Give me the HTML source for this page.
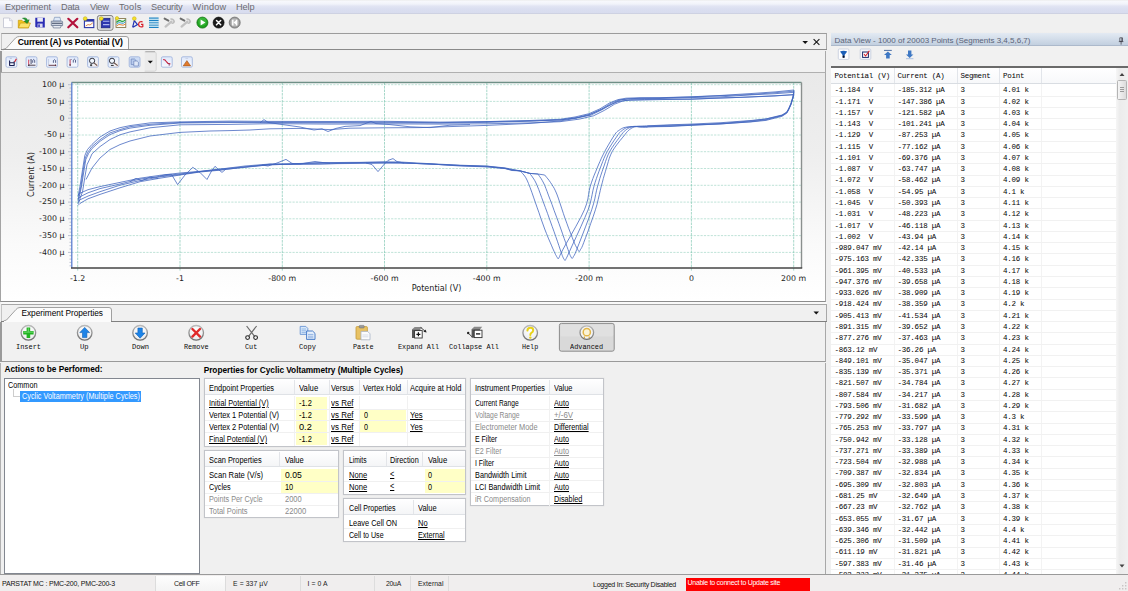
<!DOCTYPE html>
<html><head><meta charset="utf-8"><title>VersaStudio</title>
<style>
*{margin:0;padding:0;box-sizing:border-box}
html,body{width:1128px;height:591px;overflow:hidden;background:#f0f0f0}
body{position:relative;font-family:"Liberation Sans",sans-serif;font-size:8px;color:#000}
.a{position:absolute;white-space:nowrap}
.u{text-decoration:underline;text-decoration-thickness:.7px;text-underline-offset:.6px}
svg{position:absolute;overflow:visible}
.m{font-family:'Liberation Mono',monospace;font-size:7.5px;line-height:10px;color:#050505}
</style></head>
<body>
<div class="a" style="left:0.0px;top:0.0px;width:1128.0px;height:14.0px;background:linear-gradient(#ebebeb 0,#f7f8fc 1.2px,#f1f3fa 4px,#e2e5f3 6px,#dadef0 9px,#d8dcee 13px,#c9cde0 13.4px,#e8e8ee 14px)"></div>
<div class="a" style="left:5.0px;top:1.3px;font-size:9.20px;line-height:12px;letter-spacing:-0.053px;color:#6c6c70;">Experiment</div>
<div class="a" style="left:61.0px;top:1.3px;font-size:9.20px;line-height:12px;letter-spacing:-0.233px;color:#6c6c70;">Data</div>
<div class="a" style="left:90.0px;top:1.3px;font-size:9.20px;line-height:12px;letter-spacing:-0.319px;color:#6c6c70;">View</div>
<div class="a" style="left:119.0px;top:1.3px;font-size:9.20px;line-height:12px;letter-spacing:0.205px;color:#6c6c70;">Tools</div>
<div class="a" style="left:151.0px;top:1.3px;font-size:9.20px;line-height:12px;letter-spacing:-0.217px;color:#6c6c70;">Security</div>
<div class="a" style="left:192.5px;top:1.3px;font-size:9.20px;line-height:12px;letter-spacing:0.213px;color:#6c6c70;">Window</div>
<div class="a" style="left:236.0px;top:1.3px;font-size:9.20px;line-height:12px;letter-spacing:-0.105px;color:#6c6c70;">Help</div>
<svg style="left:0;top:0" width="260" height="34" viewBox="0 0 260 34"><path d="M3.5 18 H9.5 L12.2 20.7 V27.6 H3.5Z" fill="#fdfdff" stroke="#c4c6d2" stroke-width=".9"/><path d="M9.5 18V20.7H12.2" fill="#e8eaf2" stroke="#c4c6d2" stroke-width=".7"/><path d="M18.3 27.8 V20.3 H22 L23 21.5 H28.5 V27.8Z" fill="#f2c51c" stroke="#c79a10" stroke-width=".7"/><path d="M18.3 27.8 L20.4 23 H30.4 L28.5 27.8Z" fill="#fbe26a" stroke="#c79a10" stroke-width=".7"/><path d="M22.5 18.3 Q26.5 17 27.6 20.2 L29.2 19.8 L27.2 23.4 L24.2 21.2 L25.8 20.8 Q25 19 22.5 18.3Z" fill="#1f9a2e" stroke="#11701d" stroke-width=".5"/><path d="M35.3 17.8 H44.8 V27.5 H36.5 L35.3 26.3Z" fill="#2a2cb4"/><rect x="37.3" y="17.8" width="5.6" height="3.9" fill="#e9e9f4"/><rect x="37.6" y="23.6" width="5" height="3.9" fill="#d9daf0"/><rect x="38.3" y="24.4" width="1.5" height="2.6" fill="#2a2cb4"/><path d="M53.5 21 L54.5 17.3 H60 L60.8 21Z" fill="#dfe9f7" stroke="#7d93b8" stroke-width=".7"/><path d="M51.3 21.2 H61.8 Q62.6 21.2 62.6 22 V25.6 H51.3Z" fill="#cfd6e2" stroke="#5d6b86" stroke-width=".7"/><path d="M52.6 25.6 H61.3 L60.4 27.9 H53.4Z" fill="#f4f6fa" stroke="#5d6b86" stroke-width=".7"/><path d="M52 23.3H62" stroke="#39445c" stroke-width=".9"/><path d="M68.3 18.8 L77.3 27.3 M77.3 18.8 L68.3 27.3" stroke="#b3123c" stroke-width="2.2" stroke-linecap="round" fill="none"/><rect x="84.4" y="19.6" width="9.4" height="8" fill="#fdfdfd" stroke="#2a36a8" stroke-width="1.1"/><rect x="84.4" y="19.6" width="9.4" height="2" fill="#2a36a8"/><path d="M85.6 26 L88 24.6 L90 25 L92.8 22.8" stroke="#d2691e" stroke-width=".8" fill="none"/><circle cx="85.2" cy="18.6" r="1.9" fill="#f3e22a" stroke="#b8a514" stroke-width=".5"/><rect x="97.4" y="15.6" width="15.6" height="14.6" rx="2" fill="#d3d3d3" stroke="#7c7c7c" stroke-width="1"/><rect x="98.4" y="16.6" width="13.6" height="12.6" rx="1.5" fill="none" stroke="#ececec" stroke-width=".8"/><rect x="101.3" y="18.4" width="8.6" height="9.4" fill="#2d36b0" stroke="#1c2380" stroke-width=".7"/><path d="M103 21.3H109.4M103 24.6H109.4" stroke="#aeb6ee" stroke-width="1.1"/><circle cx="101.3" cy="18.6" r="1.9" fill="#f3e22a" stroke="#b8a514" stroke-width=".5"/><rect x="116" y="18.6" width="9.8" height="8.8" fill="#fbfbf3" stroke="#7a6a3a" stroke-width=".8"/><path d="M116.5 22.5 Q119 19.5 121 21 T125.5 19.6" stroke="#2da44a" stroke-width="1.3" fill="none"/><path d="M116.5 24.3 Q119 21.6 121 23 T125.5 21.8" stroke="#3aa0d8" stroke-width="1" fill="none"/><path d="M116.5 26 Q119 23.6 121 24.8 T125.5 24" stroke="#e0803a" stroke-width="1" fill="none"/><circle cx="117" cy="18.2" r="1.7" fill="#f3e22a" stroke="#b8a514" stroke-width=".5"/><circle cx="134.3" cy="18.6" r="1.9" fill="#f3e22a" stroke="#c9a416" stroke-width=".5"/><path d="M134.3 20.6 L132.6 27.3 M134.3 20.6 L137.5 24.6 L133 27.2" stroke="#2234b4" stroke-width="1.2" fill="none"/><path d="M142.6 21.8 Q138.6 21 138.6 24.4 Q138.8 27.6 142.8 26.6 V24.4 H141" stroke="#d8202a" stroke-width="1.2" fill="none"/><path d="M149 18.2H158.6M149 20.5H158.6M149 22.8H158.6M149 25.1H158.6M149 27.4H158.6" stroke="#1a82c4" stroke-width="1.3"/><path d="M149 19.35H158.6M149 21.65H158.6M149 23.95H158.6M149 26.25H158.6" stroke="#bfe4f4" stroke-width=".9"/><g transform="translate(0 0)"><path d="M165.6 26.6 L171.4 21.6" stroke="#c2c2c2" stroke-width="2.3" stroke-linecap="round"/><path d="M170.4 19 Q173.8 18.6 174.2 21.8 Q173.6 23.6 171.6 23.2" stroke="#bdbdbd" stroke-width="1.6" fill="none"/><path d="M164.6 18.6 L168.4 20.6" stroke="#6e6e6e" stroke-width="2" stroke-linecap="round"/></g><g transform="translate(16 0)"><path d="M165.6 26.6 L171.4 21.6" stroke="#c2c2c2" stroke-width="2.3" stroke-linecap="round"/><path d="M170.4 19 Q173.8 18.6 174.2 21.8 Q173.6 23.6 171.6 23.2" stroke="#bdbdbd" stroke-width="1.6" fill="none"/><path d="M164.6 18.6 L168.4 20.6" stroke="#6e6e6e" stroke-width="2" stroke-linecap="round"/></g><circle cx="202.4" cy="22.6" r="5.5" fill="#1fa31f" stroke="#127012" stroke-width=".8"/><circle cx="202.4" cy="21.4" r="4" fill="#4cc44c" opacity=".55"/><path d="M200.6 19.6 L205.4 22.6 L200.6 25.6Z" fill="#fff"/><circle cx="218.6" cy="22.6" r="5.5" fill="#1c1c1c" stroke="#000" stroke-width=".6"/><path d="M216.5 20.5 L220.7 24.7 M220.7 20.5 L216.5 24.7" stroke="#fff" stroke-width="1.5" stroke-linecap="round"/><circle cx="234.7" cy="22.6" r="5.5" fill="#9a9a9a" stroke="#6f6f6f" stroke-width=".8"/><circle cx="234.7" cy="22.6" r="4" fill="#b8b8b8"/><path d="M232.8 19.8V25.4M236.6 19.8V25.4" stroke="#fff" stroke-width="1.4"/><path d="M233.5 22.6 L236 20.6 V24.6Z" fill="#fff"/></svg>
<div class="a" style="left:0.0px;top:32.0px;width:1128.0px;height:1.4px;background:linear-gradient(#e9e9e9,#f4f4f4)"></div>
<div class="a" style="left:0.5px;top:33.0px;width:826.0px;height:17.0px;border-top:1px solid #9c9c9c;border-right:1px solid #a8a8a8;border-left:1px solid #c4c4c4;background:#f0f0f0"></div>
<svg style="left:0;top:33px" width="140" height="18"><path d="M2.5 16.5 L6 15.5 L15.5 5 Q17 3.5 19.5 3.5 L126 3.5 Q128.5 3.5 128.5 6 L128.5 16.5" fill="#fbfbfb" stroke="#a0a0a0" stroke-width="1"/></svg>
<div class="a" style="left:0.5px;top:49.3px;width:826.0px;height:1.2px;background:#8a8a8a"></div>
<div class="a" style="left:3.5px;top:49.5px;width:124.5px;height:1.0px;background:#fbfbfb"></div>
<div class="a" style="left:17.8px;top:36.8px;font-size:8.60px;line-height:11px;letter-spacing:-0.175px;font-weight:bold;">Current (A) vs Potential (V)</div>
<svg style="left:800px;top:36px" width="24" height="12"><path d="M2.4 5 L8 5 L5.2 8 Z" fill="#111"/><path d="M13.6 3.2 L19.4 8.8 M19.4 3.2 L13.6 8.8" stroke="#1a1a1a" stroke-width="1.15" fill="none"/></svg>
<div class="a" style="left:0.0px;top:51.0px;width:826.0px;height:22.0px;border-left:2px solid #9a9a9a;border-right:1px solid #a8a8a8;border-bottom:1px solid #b0b0b0;background:#f1f1f1"></div>
<svg style="left:0;top:50px" width="200" height="24" viewBox="0 50 200 24"><defs><linearGradient id="ib" x1="0" y1="0" x2="0" y2="1"><stop offset="0" stop-color="#dfe8fb"/><stop offset="1" stop-color="#f7f9fe"/></linearGradient><linearGradient id="ib2" x1="0" y1="0" x2="1" y2="1"><stop offset="0" stop-color="#d6e6fb"/><stop offset=".55" stop-color="#eef3fc"/><stop offset="1" stop-color="#f7e6de"/></linearGradient></defs><rect x="6.0" y="56.8" width="10.8" height="10.4" rx="1.4" fill="url(#ib)" stroke="#a3b6dc" stroke-width=".9"/><rect x="26.1" y="56.8" width="10.8" height="10.4" rx="1.4" fill="url(#ib)" stroke="#a3b6dc" stroke-width=".9"/><rect x="46.6" y="56.8" width="10.8" height="10.4" rx="1.4" fill="url(#ib)" stroke="#a3b6dc" stroke-width=".9"/><rect x="67.1" y="56.8" width="10.8" height="10.4" rx="1.4" fill="url(#ib)" stroke="#a3b6dc" stroke-width=".9"/><rect x="87.6" y="56.8" width="10.8" height="10.4" rx="1.4" fill="url(#ib2)" stroke="#a3b6dc" stroke-width=".9"/><rect x="108.1" y="56.8" width="10.8" height="10.4" rx="1.4" fill="url(#ib2)" stroke="#a3b6dc" stroke-width=".9"/><rect x="129.2" y="56.8" width="10.8" height="10.4" rx="1.4" fill="#cddcf5" stroke="#a3b6dc" stroke-width=".9"/><rect x="161.4" y="56.8" width="10.8" height="10.4" rx="1.4" fill="url(#ib)" stroke="#a3b6dc" stroke-width=".9"/><rect x="181.5" y="56.8" width="10.8" height="10.4" rx="1.4" fill="url(#ib)" stroke="#a3b6dc" stroke-width=".9"/><path d="M9.6 60.4V65.8M9.6 62.8H14.2M9.6 65.5H14.2M14.2 61.2V65.8" stroke="#1a1f52" stroke-width="1.1" fill="none"/><path d="M14.6 62L16.4 58.7" stroke="#d4202a" stroke-width="1.1"/><path d="M9.8 58.3H11.8" stroke="#9aa2b8" stroke-width=".6"/><path d="M28.700000000000003 59.6V64.8" stroke="#d03048" stroke-width=".9"/><path d="M30.3 60.2L31.1 59.4V64" stroke="#2a2a4a" stroke-width=".8" fill="none"/><path d="M32.7 62.8V60.4Q33.7 58.6 34.7 60.4V62.8" stroke="#35406e" stroke-width=".8" fill="none"/><path d="M28.1 65.2H35.5" stroke="#3a2a3a" stroke-width=".9"/><path d="M27.700000000000003 65.2L29.3 64.2V66.2Z" fill="#3a2a3a"/><path d="M48.6 59V65" stroke="#b9c4dc" stroke-width=".8"/><path d="M53.4 62.8V60.6Q54.5 58.8 55.6 60.6V62.8" stroke="#35406e" stroke-width=".8" fill="none"/><path d="M48.6 65.3H56.0" stroke="#5a2a3a" stroke-width=".9"/><path d="M56.6 65.3L55.0 64.3V66.3Z" fill="#5a2a3a"/><path d="M70.1 59.4V65.6" stroke="#b8304a" stroke-width=".9"/><path d="M70.1 66.2L69.1 64.4H71.1Z" fill="#3a2a3a"/><path d="M70.69999999999999 60L71.5 59.2" stroke="#2a2a4a" stroke-width=".7"/><path d="M73.3 62.6V60.2Q74.39999999999999 58.2 75.5 60.2V62.6" stroke="#35406e" stroke-width=".8" fill="none"/><circle cx="92.1" cy="60.8" r="2.6" fill="#f8fbff" fill-opacity=".6" stroke="#20202c" stroke-width=".9"/><path d="M94.0 62.8L97.19999999999999 65.6" stroke="#6a5048" stroke-width="1.1"/><path d="M91.1 63.8V66.2M90.0 65.2H92.19999999999999" stroke="#111" stroke-width=".8"/><circle cx="112.0" cy="60.8" r="2.6" fill="#f8fbff" fill-opacity=".6" stroke="#20202c" stroke-width=".9"/><path d="M113.9 62.8L117.69999999999999 65.6" stroke="#6a5048" stroke-width="1.1"/><path d="M110.89999999999999 65.4H113.69999999999999" stroke="#111" stroke-width=".9"/><path d="M131.2 59H134.6L135.79999999999998 60.2V64.6H131.2Z" fill="#b9ccee" stroke="#6a82b8" stroke-width=".7"/><path d="M133.79999999999998 61H137.2L138.39999999999998 62.2V66H133.79999999999998Z" fill="#dfe8f8" stroke="#6a82b8" stroke-width=".7"/><path d="M144.7 51.6 H154.4 Q156.2 51.6 156.2 53.4 V69.6 Q156.2 71.4 154.4 71.4 H144.7Z" fill="#ebebeb"/><path d="M144.7 51.9 H154.4 Q156.2 51.9 156.2 53.6 V69.6 Q156.2 71.2 154.4 71.2 H144.7" fill="none" stroke="#cfcfcf" stroke-width=".8"/><path d="M145.4 51.7H155" stroke="#a6a6a6" stroke-width=".9"/><path d="M147.7 60.7 H152.9 L150.3 63.5Z" fill="#111"/><path d="M163.20000000000002 59.4 L165.0 60 L166.6 62 L168.0 63.4 L170.4 64" stroke="#c41e3a" stroke-width="1.1" fill="none"/><path d="M169.20000000000002 63.4V65.8" stroke="#7a3a6a" stroke-width=".8"/><path d="M183.1 65.9 L186.9 60.6 L190.7 65.9Z" fill="#e17a2c" stroke="#8a4a1a" stroke-width=".5"/><path d="M185.5 58.4H188.1" stroke="#b0b8cc" stroke-width=".5"/></svg>
<div class="a" style="left:0.4px;top:73.0px;width:825.6px;height:228.9px;border-left:1.3px solid #a4a4a4;border-right:1px solid #a8a8a8;border-bottom:1px solid #8c8c8c;background:linear-gradient(#e9e9e9 0,#eeeeee 35%,#fafafa 75%,#ffffff 100%)"></div>
<svg style="left:0;top:0" width="830" height="305" viewBox="0 0 830 305">
<rect x="71.5" y="82.5" width="730.0" height="185.5" fill="#fff"/>
<path d="M71.5 84.7H801.5M71.5 101.4H801.5M71.5 118.2H801.5M71.5 135.0H801.5M71.5 151.7H801.5M71.5 168.5H801.5M71.5 185.3H801.5M71.5 202.1H801.5M71.5 218.8H801.5M71.5 235.6H801.5M71.5 252.4H801.5" stroke="#7cc6b0" stroke-width=".7" stroke-dasharray="2.2 1.2" fill="none" opacity=".7"/>
<path d="M77.7 82.5V271.0M180.0 82.5V271.0M282.3 82.5V271.0M384.5 82.5V271.0M486.8 82.5V271.0M589.1 82.5V271.0M691.4 82.5V271.0M793.7 82.5V271.0" stroke="#74c2ab" stroke-width=".75" stroke-dasharray="2.6 .9" fill="none" opacity=".85"/>
<path d="M68.0 84.7H71.5M69.5 88.0H71.5M69.5 91.4H71.5M69.5 94.7H71.5M69.5 98.1H71.5M68.0 101.4H71.5M69.5 104.8H71.5M69.5 108.1H71.5M69.5 111.5H71.5M69.5 114.8H71.5M68.0 118.2H71.5M69.5 121.6H71.5M69.5 124.9H71.5M69.5 128.3H71.5M69.5 131.6H71.5M68.0 135.0H71.5M69.5 138.3H71.5M69.5 141.7H71.5M69.5 145.0H71.5M69.5 148.4H71.5M68.0 151.7H71.5M69.5 155.1H71.5M69.5 158.4H71.5M69.5 161.8H71.5M69.5 165.2H71.5M68.0 168.5H71.5M69.5 171.9H71.5M69.5 175.2H71.5M69.5 178.6H71.5M69.5 181.9H71.5M68.0 185.3H71.5M69.5 188.6H71.5M69.5 192.0H71.5M69.5 195.3H71.5M69.5 198.7H71.5M68.0 202.1H71.5M69.5 205.4H71.5M69.5 208.8H71.5M69.5 212.1H71.5M69.5 215.5H71.5M68.0 218.8H71.5M69.5 222.2H71.5M69.5 225.5H71.5M69.5 228.9H71.5M69.5 232.2H71.5M68.0 235.6H71.5M69.5 238.9H71.5M69.5 242.3H71.5M69.5 245.7H71.5M69.5 249.0H71.5M68.0 252.4H71.5M69.5 255.7H71.5M69.5 259.1H71.5M69.5 262.4H71.5M69.5 265.8H71.5" stroke="#a9b3c6" stroke-width=".8" fill="none"/>
<path d="M71.5 82.5H801.5" stroke="#6f8f86" stroke-width="1.4" fill="none"/>
<path d="M801.5 82.5V268.0" stroke="#8a8f8e" stroke-width="1.4" fill="none"/>
<path d="M71.8 82.5V268.0" stroke="#4f76cc" stroke-width="1.2" fill="none"/>
<path d="M71.0 268.0H802.2" stroke="#444" stroke-width="1.35" fill="none"/>
<path d="M78.2 196.0 L80.4 184.0 L82.6 169.3 L84.8 155.5 L87.5 149.5 L92.0 144.4 L100.0 137.0 L110.0 131.0 L120.0 127.7 L130.0 125.6 L150.0 122.9 L180.0 121.9 L230.0 121.1 L270.0 121.4 L330.0 121.5 L384.0 121.3 L440.0 122.1 L487.0 121.6 L530.0 120.5 L560.0 119.3 L575.0 117.0 L589.0 113.7 L600.0 108.8 L610.0 102.7 L618.0 99.6 L626.0 98.2 L640.0 97.7 L660.0 97.7 L691.0 96.8 L720.0 95.5 L750.0 93.6 L775.0 91.9 L794.0 90.0 L793.0 96.5 L791.0 103.1 L788.6 108.8 L786.8 112.0 L782.0 115.0 L766.0 118.9 L751.0 120.5 L721.0 122.7 L691.0 124.1 L670.0 124.8 L648.0 125.8 L646.6 125.9 L644.6 126.0 L642.3 126.1 L640.0 126.1 L638.0 126.2 L636.4 126.3 L635.0 126.3 L633.7 126.4 L632.4 126.5 L631.0 126.6 L629.6 126.7 L628.1 126.9 L626.7 127.0 L625.3 127.3 L624.0 127.6 L622.9 128.0 L621.8 128.5 L620.8 129.1 L619.9 129.7 L619.0 130.4 L618.2 130.9 L617.5 131.3 L616.9 131.9 L616.0 132.8 L614.8 134.5 L613.1 137.1 L611.1 140.4 L608.9 144.1 L606.7 147.9 L604.7 151.5 L603.0 154.9 L601.4 158.2 L599.9 161.6 L598.4 165.0 L597.0 168.4 L595.6 171.8 L594.2 175.1 L592.9 178.5 L591.6 182.2 L590.3 186.1 L589.3 190.2 L588.6 194.4 L587.9 198.9 L586.6 203.9 L584.4 209.8 L580.8 217.3 L576.0 226.2 L570.8 235.5 L566.1 243.7 L562.7 249.9 L560.8 253.5 L560.0 255.3 L559.7 256.0 L559.6 256.3 L559.4 256.9 L559.0 257.7 L558.7 258.2 L558.5 258.5 L558.3 258.7 L558.2 258.9 L558.0 258.7 L557.8 258.4 L557.5 257.9 L557.1 257.3 L556.6 256.5 L556.1 255.5 L555.5 254.5 L554.9 253.1 L554.1 251.4 L553.0 249.0 L551.7 245.9 L550.1 242.2 L548.3 238.1 L546.5 233.6 L544.7 229.0 L542.9 224.0 L540.9 218.5 L539.0 212.8 L537.0 207.2 L535.2 202.0 L533.5 197.1 L531.8 192.2 L530.1 187.6 L528.5 183.5 L527.0 180.0 L525.5 177.2 L523.9 175.0 L522.4 173.3 L521.2 171.9 L520.3 170.9 L512.0 169.3 L505.0 167.9 L487.0 166.1 L460.0 165.2 L430.0 163.7 L400.0 162.0 L384.0 161.8 L350.0 162.8 L320.0 162.8 L290.0 163.8 L270.0 164.0 L245.0 166.0 L220.0 169.1 L200.0 171.3 L180.0 173.0 L160.0 175.3 L140.0 178.2 L120.0 182.4 L100.0 186.6 L88.0 189.7 L80.0 193.2 L78.0 195.1 M78.2 198.6 L81.0 186.0 L83.1 170.8 L85.3 157.9 L88.0 151.9 L92.0 146.5 L100.0 139.7 L110.0 132.9 L120.0 129.6 L130.0 126.7 L150.0 124.3 L180.0 122.5 L230.0 121.9 L270.0 122.2 L330.0 122.3 L384.0 122.1 L440.0 122.7 L487.0 121.7 L530.0 120.9 L560.0 120.0 L576.1 117.8 L590.1 114.2 L601.1 109.5 L611.1 103.2 L619.1 100.0 L627.1 98.9 L641.1 98.2 L660.0 97.9 L691.0 97.0 L720.0 95.7 L750.0 94.6 L775.0 92.7 L794.0 91.2 L793.0 96.9 L791.0 103.9 L788.6 109.0 L786.8 112.3 L782.0 115.4 L766.0 119.1 L751.0 120.9 L721.0 123.5 L691.0 124.8 L670.0 125.3 L648.0 126.0 L646.7 126.4 L644.9 126.4 L642.8 126.4 L640.8 126.5 L639.0 126.5 L637.6 126.5 L636.3 126.5 L635.1 126.5 L634.0 126.5 L632.8 126.6 L631.6 126.7 L630.4 126.8 L629.2 127.0 L628.0 127.3 L626.9 127.6 L625.9 128.0 L624.9 128.5 L624.0 129.1 L623.1 129.7 L622.2 130.4 L621.5 130.9 L620.9 131.3 L620.3 131.9 L619.4 132.8 L618.2 134.5 L616.4 137.1 L614.1 140.4 L611.7 144.1 L609.3 147.9 L607.2 151.5 L605.5 154.9 L604.0 158.2 L602.7 161.6 L601.4 165.0 L600.1 168.4 L598.8 171.8 L597.6 175.1 L596.4 178.5 L595.2 182.2 L594.0 186.1 L593.0 190.2 L592.2 194.3 L591.3 198.7 L590.1 203.8 L588.1 209.8 L584.9 217.5 L580.8 226.8 L576.4 236.5 L572.4 245.1 L569.5 251.5 L567.8 255.2 L567.0 257.0 L566.6 257.7 L566.5 258.0 L566.2 258.5 L565.8 259.3 L565.5 259.8 L565.3 260.1 L565.1 260.3 L565.0 260.5 L564.8 260.2 L564.5 259.9 L564.2 259.4 L563.8 258.9 L563.4 258.1 L563.0 257.3 L562.7 256.6 L562.3 255.6 L561.8 254.2 L561.0 252.0 L560.0 249.0 L558.8 245.4 L557.4 241.2 L555.8 236.7 L554.1 231.8 L552.1 226.3 L549.9 220.1 L547.6 213.6 L545.3 207.4 L543.3 202.0 L541.6 197.4 L540.1 193.2 L538.7 189.4 L537.3 186.0 L536.0 183.0 L534.6 180.3 L533.1 178.0 L531.8 176.1 L530.6 174.6 L529.8 173.4 L520.3 170.9 L512.0 169.9 L505.0 168.3 L487.0 166.2 L460.0 165.5 L430.0 164.1 L400.0 162.8 L384.0 162.3 L350.0 162.4 L320.0 162.7 L290.0 164.2 L270.0 164.2 L245.0 166.9 L220.0 169.1 L200.0 171.6 L180.0 173.9 L160.0 176.3 L140.0 179.1 L120.0 184.0 L100.0 188.6 L88.0 192.8 L80.0 196.8 L78.0 199.2 M78.2 201.2 L81.4 187.1 L83.6 173.0 L85.8 159.5 L88.5 153.6 L92.0 148.5 L100.0 141.3 L110.0 134.6 L120.0 130.7 L130.0 128.1 L150.0 125.3 L180.0 123.0 L230.0 122.5 L270.0 122.7 L330.0 122.9 L384.0 122.8 L440.0 123.0 L487.0 122.4 L530.0 121.2 L560.0 119.9 L577.0 117.8 L591.0 115.1 L602.0 109.7 L612.0 104.0 L620.0 100.1 L628.0 99.0 L642.0 98.6 L660.0 98.5 L691.0 97.6 L720.0 96.9 L750.0 94.9 L775.0 93.7 L794.0 92.3 L793.0 97.5 L791.0 104.2 L788.6 109.6 L786.8 112.9 L782.0 115.6 L766.0 119.8 L751.0 121.7 L721.0 123.9 L691.0 125.1 L670.0 126.0 L648.0 126.8 L646.9 126.8 L645.3 126.8 L643.4 126.8 L641.6 126.8 L640.0 126.8 L638.7 126.8 L637.6 126.7 L636.6 126.6 L635.6 126.6 L634.6 126.6 L633.6 126.7 L632.6 126.8 L631.7 127.0 L630.7 127.3 L629.8 127.6 L628.9 128.0 L628.0 128.5 L627.1 129.1 L626.2 129.7 L625.4 130.4 L624.7 130.9 L624.2 131.3 L623.7 131.9 L622.9 132.8 L621.6 134.5 L619.7 137.1 L617.2 140.4 L614.5 144.1 L611.9 147.9 L609.7 151.5 L608.0 154.9 L606.7 158.2 L605.5 161.6 L604.4 165.0 L603.2 168.4 L602.0 171.8 L600.9 175.1 L599.8 178.5 L598.8 182.2 L597.6 186.1 L596.6 190.2 L595.7 194.4 L594.8 198.9 L593.5 203.9 L591.7 209.8 L589.1 217.3 L585.8 226.1 L582.3 235.3 L579.1 243.5 L576.7 249.6 L575.3 253.2 L574.4 255.0 L574.0 255.7 L573.7 256.0 L573.4 256.6 L573.0 257.4 L572.7 257.9 L572.5 258.2 L572.3 258.4 L572.2 258.6 L572.0 258.3 L571.7 258.0 L571.4 257.6 L571.0 257.0 L570.6 256.2 L570.2 255.4 L569.8 254.5 L569.4 253.4 L568.8 251.8 L568.0 249.5 L566.9 246.4 L565.7 242.7 L564.2 238.5 L562.6 233.9 L560.9 229.0 L558.9 223.4 L556.6 217.1 L554.2 210.7 L552.0 204.5 L550.0 199.3 L548.4 195.1 L547.1 191.5 L545.9 188.4 L544.8 185.6 L543.6 183.0 L542.3 180.6 L541.0 178.4 L539.7 176.6 L538.7 175.1 L537.9 174.0 L529.8 173.4 L520.3 170.9 L512.0 170.1 L505.0 168.3 L487.0 166.7 L460.0 165.5 L430.0 164.1 L400.0 162.7 L384.0 162.9 L350.0 163.5 L320.0 163.8 L290.0 164.3 L270.0 164.7 L245.0 167.3 L220.0 169.8 L200.0 171.6 L180.0 174.6 L160.0 176.9 L140.0 180.6 L120.0 185.2 L100.0 191.7 L88.0 196.1 L80.0 199.8 L78.0 202.5 M78.2 203.8 L82.6 191.3 L84.8 177.6 L87.0 164.7 L89.7 159.1 L92.0 153.8 L100.0 146.6 L110.0 139.5 L120.0 134.8 L130.0 131.9 L150.0 127.8 L180.0 124.8 L230.0 124.4 L270.0 123.7 L330.0 124.1 L384.0 123.9 L440.0 124.1 L487.0 123.8 L530.0 122.9 L560.0 121.7 L579.5 119.1 L593.5 115.8 L604.5 110.3 L614.5 104.2 L622.5 101.1 L630.5 99.8 L644.5 99.5 L660.0 99.2 L691.0 99.3 L720.0 98.0 L750.0 97.0 L775.0 96.0 L794.0 94.5 L793.0 97.8 L791.0 104.6 L788.6 109.9 L786.8 113.1 L782.0 116.3 L766.0 120.4 L751.0 121.9 L721.0 123.9 L691.0 125.3 L670.0 126.5 L648.0 126.8 L647.0 127.2 L645.6 127.2 L644.0 127.2 L642.4 127.2 L641.0 127.1 L639.9 127.0 L638.9 126.9 L638.1 126.7 L637.2 126.6 L636.4 126.6 L635.6 126.7 L634.9 126.8 L634.2 127.0 L633.5 127.3 L632.7 127.6 L631.9 128.0 L631.1 128.5 L630.2 129.1 L629.4 129.7 L628.6 130.4 L628.0 130.9 L627.6 131.3 L627.1 131.9 L626.3 132.8 L625.0 134.5 L622.9 137.1 L620.2 140.4 L617.3 144.1 L614.5 147.9 L612.2 151.5 L610.6 154.9 L609.3 158.2 L608.3 161.6 L607.3 165.0 L606.3 168.4 L605.3 171.8 L604.3 175.1 L603.3 178.5 L602.4 182.2 L601.3 186.1 L600.3 190.3 L599.3 194.7 L598.2 199.4 L597.0 204.4 L595.4 209.8 L593.3 216.2 L590.7 223.5 L588.1 231.0 L585.6 237.6 L583.7 242.7 L582.5 245.8 L581.7 247.6 L581.2 248.5 L580.8 249.0 L580.4 249.7 L580.0 250.5 L579.7 251.0 L579.5 251.3 L579.3 251.5 L579.2 251.7 L579.0 251.5 L578.8 251.2 L578.5 250.8 L578.1 250.2 L577.6 249.3 L577.0 248.2 L576.4 247.1 L575.6 245.6 L574.7 243.7 L573.6 241.0 L572.2 237.4 L570.5 233.0 L568.6 228.2 L566.8 223.2 L565.0 218.3 L563.3 213.3 L561.6 208.1 L559.9 202.9 L558.3 198.1 L556.8 194.0 L555.4 190.8 L554.2 188.3 L553.0 186.3 L551.8 184.4 L550.6 182.6 L549.3 180.7 L547.9 178.9 L546.6 177.3 L545.5 176.0 L544.7 175.0 L537.9 174.0 L529.8 173.4 L520.3 170.9 L512.0 170.5 L505.0 168.6 L487.0 166.9 L460.0 166.0 L430.0 163.9 L400.0 163.0 L384.0 163.0 L350.0 163.0 L320.0 164.1 L290.0 164.2 L270.0 164.8 L245.0 167.0 L220.0 170.2 L200.0 172.0 L180.0 175.0 L160.0 178.2 L140.0 181.7 L120.0 187.8 L100.0 194.4 L88.0 198.8 L80.0 203.4 L78.0 205.4 M86.0 179.5 L92.0 168.0 L100.0 158.0 L110.0 149.5 L120.0 144.6 L130.0 141.0 L150.0 136.0 L180.0 132.4 L210.0 131.0 L230.0 130.6 L250.0 130.0 L270.0 128.8 L300.0 128.4 L330.0 129.6 L350.0 128.2 L384.0 127.8 L420.0 127.6 L450.0 126.6 L487.0 125.4 L530.0 123.4 L560.0 121.0 L575.0 118.4 L589.0 115.0 L600.0 110.0 L610.0 105.0 L618.0 101.6 L626.0 100.4 L660.0 99.6 L691.0 99.0 L740.0 97.4 L794.0 94.8 M160.0 176.0 L166.0 174.6 L171.5 174.4 L177.6 184.6 L185.0 175.0 L192.8 167.3 L200.0 172.5 L207.0 179.5 L211.0 172.0 L215.0 166.3 L219.0 170.0 L222.0 172.4 L226.0 169.0 M262.0 165.0 L268.0 166.0 L277.0 163.0 L286.0 159.4 L292.0 163.4 L300.0 164.0 L315.0 161.5 L330.0 163.5 M366.0 163.0 L372.0 164.5 L378.0 171.6 L384.0 164.5 L388.0 160.4 L393.0 158.6 L397.0 161.6 L404.0 163.0 M260.0 122.8 L264.0 119.6 L268.0 122.4 L282.0 124.5 L300.0 127.0 L314.0 130.0 L322.0 128.8 L328.0 131.5 L336.0 128.4 L345.0 126.4 L360.0 125.6 L371.0 121.4 L376.0 123.6 L390.0 124.6 L410.0 126.8 L430.0 127.6 L450.0 125.2 L470.0 124.6 M130.0 181.5 L136.0 178.4 L142.0 180.6 L150.0 177.0 L158.0 178.6" stroke="#4165bf" stroke-width=".85" fill="none" stroke-linejoin="round" opacity=".92"/>
</svg>
<div class="a" style="left:41.9px;top:80.0px;font-size:7.85px;line-height:10px;font-family:'DejaVu Sans',sans-serif;color:#222;">100 µ</div>
<div class="a" style="left:46.9px;top:96.7px;font-size:7.85px;line-height:10px;font-family:'DejaVu Sans',sans-serif;color:#222;">50 µ</div>
<div class="a" style="left:59.4px;top:113.5px;font-size:7.85px;line-height:10px;font-family:'DejaVu Sans',sans-serif;color:#222;">0</div>
<div class="a" style="left:44.1px;top:130.3px;font-size:7.85px;line-height:10px;font-family:'DejaVu Sans',sans-serif;color:#222;">-50 µ</div>
<div class="a" style="left:39.1px;top:147.0px;font-size:7.85px;line-height:10px;font-family:'DejaVu Sans',sans-serif;color:#222;">-100 µ</div>
<div class="a" style="left:39.1px;top:163.8px;font-size:7.85px;line-height:10px;font-family:'DejaVu Sans',sans-serif;color:#222;">-150 µ</div>
<div class="a" style="left:39.1px;top:180.6px;font-size:7.85px;line-height:10px;font-family:'DejaVu Sans',sans-serif;color:#222;">-200 µ</div>
<div class="a" style="left:39.1px;top:197.4px;font-size:7.85px;line-height:10px;font-family:'DejaVu Sans',sans-serif;color:#222;">-250 µ</div>
<div class="a" style="left:39.1px;top:214.1px;font-size:7.85px;line-height:10px;font-family:'DejaVu Sans',sans-serif;color:#222;">-300 µ</div>
<div class="a" style="left:39.1px;top:230.9px;font-size:7.85px;line-height:10px;font-family:'DejaVu Sans',sans-serif;color:#222;">-350 µ</div>
<div class="a" style="left:39.1px;top:247.7px;font-size:7.85px;line-height:10px;font-family:'DejaVu Sans',sans-serif;color:#222;">-400 µ</div>
<div class="a" style="left:70.0px;top:273.9px;font-size:7.85px;line-height:10px;font-family:'DejaVu Sans',sans-serif;color:#222;">-1.2</div>
<div class="a" style="left:176.1px;top:273.9px;font-size:7.85px;line-height:10px;font-family:'DejaVu Sans',sans-serif;color:#222;">-1</div>
<div class="a" style="left:268.3px;top:273.9px;font-size:7.85px;line-height:10px;font-family:'DejaVu Sans',sans-serif;color:#222;">-800 m</div>
<div class="a" style="left:370.6px;top:273.9px;font-size:7.85px;line-height:10px;font-family:'DejaVu Sans',sans-serif;color:#222;">-600 m</div>
<div class="a" style="left:472.8px;top:273.9px;font-size:7.85px;line-height:10px;font-family:'DejaVu Sans',sans-serif;color:#222;">-400 m</div>
<div class="a" style="left:575.1px;top:273.9px;font-size:7.85px;line-height:10px;font-family:'DejaVu Sans',sans-serif;color:#222;">-200 m</div>
<div class="a" style="left:688.9px;top:273.9px;font-size:7.85px;line-height:10px;font-family:'DejaVu Sans',sans-serif;color:#222;">0</div>
<div class="a" style="left:781.1px;top:273.9px;font-size:7.85px;line-height:10px;font-family:'DejaVu Sans',sans-serif;color:#222;">200 m</div>
<div class="a" style="left:411.7px;top:282.8px;font-size:8.05px;line-height:11px;font-family:'DejaVu Sans',sans-serif;color:#222;">Potential (V)</div>
<div class="a" style="left:8.8px;top:169.3px;font-size:8.10px;line-height:11px;font-family:'DejaVu Sans',sans-serif;color:#222;transform:rotate(-90deg);transform-origin:50% 50%;">Current (A)</div>
<div class="a" style="left:0.5px;top:302.0px;width:826.0px;height:2.2px;background:#f9f9f9"></div>
<div class="a" style="left:0.5px;top:304.1px;width:826.0px;height:17.4px;border-top:.8px solid #a6a6a6;border-left:1px solid #c4c4c4;border-right:1px solid #a8a8a8;background:#f0f0f0"></div>
<svg style="left:0;top:304px" width="110" height="19"><path d="M3.5 17 L6.5 16 L16 5.5 Q17.5 3.5 20 3.5 L109 3.5 Q111.5 3.5 111.5 6 L111.5 17" fill="#fbfbfb" stroke="#a0a0a0" stroke-width="1"/></svg>
<div class="a" style="left:0.5px;top:320.5px;width:826.0px;height:1.3px;background:#808080"></div>
<div class="a" style="left:4.0px;top:320.5px;width:107.0px;height:1.3px;background:#fbfbfb"></div>
<div class="a" style="left:21.5px;top:307.8px;font-size:8.30px;line-height:11px;letter-spacing:-0.029px;">Experiment Properties</div>
<svg style="left:812px;top:309px" width="10" height="8"><path d="M1.5 2.5 L7 2.5 L4.25 5.5 Z" fill="#111"/></svg>
<div class="a" style="left:0.0px;top:321.8px;width:826.0px;height:40.7px;border-left:2px solid #9a9a9a;border-right:1px solid #a8a8a8;border-bottom:1px solid #9a9a9a;background:#f1f1f1"></div>
<svg style="left:0;top:320px" width="640" height="44" viewBox="0 320 640 44"><defs><linearGradient id="rg" x1="0" y1="0" x2="0" y2="1"><stop offset="0" stop-color="#b9b9b9"/><stop offset="1" stop-color="#6e6e6e"/></linearGradient><radialGradient id="wg" cx=".5" cy=".35" r=".7"><stop offset="0" stop-color="#ffffff"/><stop offset="1" stop-color="#e9eaec"/></radialGradient></defs><rect x="559.4" y="323.4" width="54.8" height="27.8" rx="2" fill="#d9d9d9" stroke="#8b8b8b" stroke-width="1"/><rect x="560.4" y="324.4" width="52.8" height="12" rx="1.5" fill="#e1e1e1" opacity=".8"/><circle cx="28.4" cy="332.8" r="7.3" fill="url(#wg)" stroke="url(#rg)" stroke-width="1.3"/><path d="M28.4 327.6V338M23.2 332.8H33.6" stroke="#22b422" stroke-width="3.6"/><path d="M28.4 328.2V332M24 332.2H33" stroke="#7fe07f" stroke-width="1.2" opacity=".7"/><circle cx="84.7" cy="332.8" r="7.3" fill="url(#wg)" stroke="url(#rg)" stroke-width="1.3"/><path d="M84.7 327.4 L89.6 332.6 H86.9 V337.6 H82.5 V332.6 H79.8Z" fill="#1d84e8" stroke="#0f5fb4" stroke-width=".6"/><circle cx="140.1" cy="332.8" r="7.3" fill="url(#wg)" stroke="url(#rg)" stroke-width="1.3"/><path d="M140.1 338.2 L145 333 H142.3 V328 H137.9 V333 H135.2Z" fill="#1d84e8" stroke="#0f5fb4" stroke-width=".6"/><circle cx="196.2" cy="332.8" r="7.3" fill="url(#wg)" stroke="url(#rg)" stroke-width="1.3"/><path d="M192.4 329 L200 336.6 M200 329 L192.4 336.6" stroke="#e02a2a" stroke-width="2.4" stroke-linecap="round"/><path d="M246.6 326 L254.6 336.4 M256.6 326 L248.6 336.4" stroke="#6a6a6a" stroke-width="1.2" fill="none"/><circle cx="247.6" cy="337.6" r="1.9" fill="none" stroke="#2a2a2a" stroke-width="1.1"/><circle cx="255.6" cy="337.6" r="1.9" fill="none" stroke="#2a2a2a" stroke-width="1.1"/><path d="M300.2 326.4 H305.8 L307.8 328.4 V334.4 H300.2Z" fill="#d8e8fa" stroke="#5a8ad0" stroke-width=".8"/><path d="M301.6 329H306M301.6 330.8H306M301.6 332.6H306" stroke="#6a9ad8" stroke-width=".6"/><path d="M306.6 331 H312.6 L315 333.4 V339.4 H306.6Z" fill="#e6f0fc" stroke="#3a72c4" stroke-width=".9"/><path d="M308 334.4H313.4M308 336.2H313.4M308 337.8H313.4" stroke="#5a8ad0" stroke-width=".6"/><rect x="356" y="326.6" width="11.4" height="12.6" rx="1" fill="#e8c264" stroke="#c49a38" stroke-width=".8"/><rect x="359.2" y="325.4" width="5" height="2.6" rx=".8" fill="#9a9a9a" stroke="#6a6a6a" stroke-width=".5"/><path d="M361 331.4 H367.6 L370 333.8 V339.8 H361Z" fill="#fbfcfe" stroke="#a8b4c8" stroke-width=".8"/><path d="M362.4 335H368.4M362.4 336.8H368.4" stroke="#c2cad8" stroke-width=".6"/><path d="M412 329.4 L414.6 327 H422.4 L420 329.4Z" fill="#8a8a8a"/><path d="M412 329.4 H420.4 V338 H412Z" fill="#555"/><rect x="414.6" y="330.6" width="7.6" height="7.4" fill="#fff" stroke="#333" stroke-width=".9"/><path d="M416.4 334.3H420.4M418.4 332.3V336.3" stroke="#111" stroke-width="1.2"/><path d="M420.6 327.4 L425.6 331.6" stroke="#444" stroke-width="1"/><path d="M426.6 332.6 L423.4 331.8 L425.6 329.6Z" fill="#222"/><path d="M471.6 329.2 L474.2 326.8 H482.2 L480.2 329.2Z" fill="#8a8a8a"/><path d="M471.6 329.2 H480 V337.6 H471.6Z" fill="#555"/><rect x="474.2" y="330.2" width="7.8" height="7.4" fill="#fff" stroke="#333" stroke-width=".9"/><path d="M476 333.9H480.2" stroke="#111" stroke-width="1.3"/><path d="M468.6 333.4 L472.6 337.4" stroke="#444" stroke-width="1"/><circle cx="468.2" cy="333" r="1.2" fill="#222"/><circle cx="530.2" cy="332.8" r="7.3" fill="url(#wg)" stroke="url(#rg)" stroke-width="1.3"/><path d="M527.4 330.6 Q527.6 327.8 530.4 327.8 Q533.2 327.8 533.2 330.2 Q533.2 331.8 531.4 332.8 Q530.3 333.5 530.3 335" stroke="#e8d21a" stroke-width="2" fill="none" stroke-linecap="round"/><circle cx="530.3" cy="337.6" r="1.2" fill="#e8d21a"/><circle cx="586.8" cy="332.6" r="6.8" fill="#f4f4f2" stroke="url(#rg)" stroke-width="1.3"/><circle cx="586.8" cy="332.2" r="3.6" fill="#fbf3d6" stroke="#e2b64a" stroke-width="1.5"/><path d="M584.4 336.6V338.2M589.2 336.6V338.2" stroke="#d8a83a" stroke-width="1.2"/></svg>
<div class="a" style="left:16.0px;top:342.1px;font-size:7.80px;line-height:10px;transform:scaleX(0.890);transform-origin:0 50%;font-family:'Liberation Mono',monospace;color:#0a0a0a;">Insert</div>
<div class="a" style="left:80.4px;top:342.1px;font-size:7.80px;line-height:10px;transform:scaleX(0.919);transform-origin:0 50%;font-family:'Liberation Mono',monospace;color:#0a0a0a;">Up</div>
<div class="a" style="left:131.6px;top:342.1px;font-size:7.80px;line-height:10px;transform:scaleX(0.908);transform-origin:0 50%;font-family:'Liberation Mono',monospace;color:#0a0a0a;">Down</div>
<div class="a" style="left:183.5px;top:342.1px;font-size:7.80px;line-height:10px;transform:scaleX(0.879);transform-origin:0 50%;font-family:'Liberation Mono',monospace;color:#0a0a0a;">Remove</div>
<div class="a" style="left:245.2px;top:342.1px;font-size:7.80px;line-height:10px;transform:scaleX(0.869);transform-origin:0 50%;font-family:'Liberation Mono',monospace;color:#0a0a0a;">Cut</div>
<div class="a" style="left:298.8px;top:342.1px;font-size:7.80px;line-height:10px;transform:scaleX(0.908);transform-origin:0 50%;font-family:'Liberation Mono',monospace;color:#0a0a0a;">Copy</div>
<div class="a" style="left:352.8px;top:342.1px;font-size:7.80px;line-height:10px;transform:scaleX(0.876);transform-origin:0 50%;font-family:'Liberation Mono',monospace;color:#0a0a0a;">Paste</div>
<div class="a" style="left:397.9px;top:342.1px;font-size:7.80px;line-height:10px;transform:scaleX(0.878);transform-origin:0 50%;font-family:'Liberation Mono',monospace;color:#0a0a0a;">Expand All</div>
<div class="a" style="left:449.0px;top:342.1px;font-size:7.80px;line-height:10px;transform:scaleX(0.888);transform-origin:0 50%;font-family:'Liberation Mono',monospace;color:#0a0a0a;">Collapse All</div>
<div class="a" style="left:522.0px;top:342.1px;font-size:7.80px;line-height:10px;transform:scaleX(0.865);transform-origin:0 50%;font-family:'Liberation Mono',monospace;color:#0a0a0a;">Help</div>
<div class="a" style="left:570.2px;top:342.1px;font-size:7.80px;line-height:10px;transform:scaleX(0.884);transform-origin:0 50%;font-family:'Liberation Mono',monospace;color:#0a0a0a;">Advanced</div>
<div class="a" style="left:0.4px;top:362.5px;width:825.6px;height:211.5px;border-left:1.2px solid #b0b0b0;border-right:1px solid #a8a8a8;background:#f0f0f0"></div>
<div class="a" style="left:4.5px;top:363.7px;font-size:8.30px;line-height:11px;letter-spacing:-0.048px;font-weight:bold;">Actions to be Performed:</div>
<div class="a" style="left:203.7px;top:364.5px;font-size:8.30px;line-height:11px;letter-spacing:-0.041px;font-weight:bold;">Properties for Cyclic Voltammetry (Multiple Cycles)</div>
<div class="a" style="left:3.7px;top:378.0px;width:196.8px;height:195.6px;background:#fff;border:1px solid #828790"></div>
<div class="a" style="left:8.0px;top:380.3px;font-size:8.30px;line-height:11px;transform:scaleX(0.876);transform-origin:0 50%;">Common</div>
<svg style="left:10px;top:389px" width="12" height="10"><path d="M3.5 0.5V7.5H9.5" stroke="#9a9a9a" stroke-width="1" stroke-dasharray="1 1" fill="none"/></svg>
<div class="a" style="left:19.9px;top:390.8px;width:121.1px;height:11.0px;background:#3399ff"></div>
<div class="a" style="left:21.5px;top:391.3px;font-size:8.30px;line-height:11px;transform:scaleX(0.879);transform-origin:0 50%;color:#fff;">Cyclic Voltammetry (Multiple Cycles)</div>
<div class="a" style="left:204.4px;top:378.4px;width:262.1px;height:68.2px;background:#fff;border:1px solid #c2c4c9;box-shadow:0 0 0 .5px #e6e6e6"></div>
<div class="a" style="left:205.4px;top:379.4px;width:260.1px;height:16.0px;background:linear-gradient(#ffffff,#f4f5f7);border-bottom:1px solid #dfe2e6"></div>
<div class="a" style="left:294.3px;top:380.4px;width:0.8px;height:14.0px;background:#e3e5e9"></div>
<div class="a" style="left:329.0px;top:380.4px;width:0.8px;height:14.0px;background:#e3e5e9"></div>
<div class="a" style="left:358.8px;top:380.4px;width:0.8px;height:14.0px;background:#e3e5e9"></div>
<div class="a" style="left:407.2px;top:380.4px;width:0.8px;height:14.0px;background:#e3e5e9"></div>
<div class="a" style="left:209.4px;top:383.1px;font-size:8.30px;line-height:11px;transform:scaleX(0.892);transform-origin:0 50%;">Endpoint Properties</div>
<div class="a" style="left:298.7px;top:383.1px;font-size:8.30px;line-height:11px;transform:scaleX(0.932);transform-origin:0 50%;">Value</div>
<div class="a" style="left:331.0px;top:383.1px;font-size:8.30px;line-height:11px;transform:scaleX(0.899);transform-origin:0 50%;">Versus</div>
<div class="a" style="left:363.3px;top:383.1px;font-size:8.30px;line-height:11px;transform:scaleX(0.890);transform-origin:0 50%;">Vertex Hold</div>
<div class="a" style="left:410.4px;top:383.1px;font-size:8.30px;line-height:11px;transform:scaleX(0.906);transform-origin:0 50%;">Acquire at Hold</div>
<div class="a" style="left:295.5px;top:396.7px;width:31.7px;height:12.0px;background:#ffffc6"></div>
<div class="a" style="left:295.5px;top:408.6px;width:31.7px;height:12.0px;background:#ffffc6"></div>
<div class="a" style="left:295.5px;top:420.6px;width:31.7px;height:12.0px;background:#ffffc6"></div>
<div class="a" style="left:295.5px;top:432.7px;width:31.7px;height:12.0px;background:#ffffc6"></div>
<div class="a" style="left:360.0px;top:408.6px;width:45.6px;height:12.0px;background:#ffffc6"></div>
<div class="a" style="left:360.0px;top:420.6px;width:45.6px;height:12.0px;background:#ffffc6"></div>
<div class="a" style="left:205.4px;top:408.5px;width:260.1px;height:0.6px;background:#f0f0f0"></div>
<div class="a" style="left:205.4px;top:420.4px;width:260.1px;height:0.6px;background:#f0f0f0"></div>
<div class="a" style="left:205.4px;top:432.4px;width:260.1px;height:0.6px;background:#f0f0f0"></div>
<div class="a" style="left:294.3px;top:396.0px;width:0.8px;height:50.0px;background:#f1f1f1"></div>
<div class="a" style="left:329.0px;top:396.0px;width:0.8px;height:50.0px;background:#f1f1f1"></div>
<div class="a" style="left:358.8px;top:396.0px;width:0.8px;height:50.0px;background:#f1f1f1"></div>
<div class="a" style="left:407.2px;top:396.0px;width:0.8px;height:50.0px;background:#f1f1f1"></div>
<div class="a u" style="left:209.4px;top:398.0px;font-size:8.30px;line-height:11px;transform:scaleX(0.885);transform-origin:0 50%;">Initial Potential (V)</div>
<div class="a" style="left:209.4px;top:409.9px;font-size:8.30px;line-height:11px;transform:scaleX(0.894);transform-origin:0 50%;">Vertex 1 Potential (V)</div>
<div class="a" style="left:209.4px;top:421.9px;font-size:8.30px;line-height:11px;transform:scaleX(0.894);transform-origin:0 50%;">Vertex 2 Potential (V)</div>
<div class="a u" style="left:209.4px;top:434.0px;font-size:8.30px;line-height:11px;transform:scaleX(0.881);transform-origin:0 50%;">Final Potential (V)</div>
<div class="a" style="left:298.7px;top:398.0px;font-size:8.30px;line-height:11px;transform:scaleX(0.895);transform-origin:0 50%;">-1.2</div>
<div class="a u" style="left:331.0px;top:398.0px;font-size:8.30px;line-height:11px;transform:scaleX(0.957);transform-origin:0 50%;">vs Ref</div>
<div class="a" style="left:298.7px;top:409.9px;font-size:8.30px;line-height:11px;transform:scaleX(0.895);transform-origin:0 50%;">-1.2</div>
<div class="a u" style="left:331.0px;top:409.9px;font-size:8.30px;line-height:11px;transform:scaleX(0.957);transform-origin:0 50%;">vs Ref</div>
<div class="a" style="left:298.7px;top:421.9px;font-size:8.30px;line-height:11px;transform:scaleX(1.109);transform-origin:0 50%;">0.2</div>
<div class="a u" style="left:331.0px;top:421.9px;font-size:8.30px;line-height:11px;transform:scaleX(0.957);transform-origin:0 50%;">vs Ref</div>
<div class="a" style="left:298.7px;top:434.0px;font-size:8.30px;line-height:11px;transform:scaleX(0.895);transform-origin:0 50%;">-1.2</div>
<div class="a u" style="left:331.0px;top:434.0px;font-size:8.30px;line-height:11px;transform:scaleX(0.957);transform-origin:0 50%;">vs Ref</div>
<div class="a" style="left:363.5px;top:409.9px;font-size:8.30px;line-height:11px;transform:scaleX(0.867);transform-origin:0 50%;">0</div>
<div class="a u" style="left:410.4px;top:409.9px;font-size:8.30px;line-height:11px;transform:scaleX(0.931);transform-origin:0 50%;">Yes</div>
<div class="a" style="left:363.5px;top:421.9px;font-size:8.30px;line-height:11px;transform:scaleX(0.867);transform-origin:0 50%;">0</div>
<div class="a u" style="left:410.4px;top:421.9px;font-size:8.30px;line-height:11px;transform:scaleX(0.931);transform-origin:0 50%;">Yes</div>
<div class="a" style="left:204.4px;top:450.2px;width:135.0px;height:68.2px;background:#fff;border:1px solid #c2c4c9;box-shadow:0 0 0 .5px #e6e6e6"></div>
<div class="a" style="left:205.4px;top:451.2px;width:133.0px;height:16.1px;background:linear-gradient(#ffffff,#f4f5f7);border-bottom:1px solid #dfe2e6"></div>
<div class="a" style="left:278.5px;top:452.2px;width:0.8px;height:14.1px;background:#e3e5e9"></div>
<div class="a" style="left:209.4px;top:455.2px;font-size:8.30px;line-height:11px;transform:scaleX(0.891);transform-origin:0 50%;">Scan Properties</div>
<div class="a" style="left:284.8px;top:455.2px;font-size:8.30px;line-height:11px;transform:scaleX(0.907);transform-origin:0 50%;">Value</div>
<div class="a" style="left:281.0px;top:468.7px;width:57.4px;height:12.0px;background:#ffffc6"></div>
<div class="a" style="left:281.0px;top:480.7px;width:57.4px;height:12.0px;background:#ffffc6"></div>
<div class="a" style="left:205.4px;top:480.5px;width:133.0px;height:0.6px;background:#f0f0f0"></div>
<div class="a" style="left:205.4px;top:492.5px;width:133.0px;height:0.6px;background:#f0f0f0"></div>
<div class="a" style="left:205.4px;top:504.6px;width:133.0px;height:0.6px;background:#f0f0f0"></div>
<div class="a" style="left:209.4px;top:470.0px;font-size:8.30px;line-height:11px;transform:scaleX(0.924);transform-origin:0 50%;">Scan Rate (V/s)</div>
<div class="a" style="left:209.4px;top:482.0px;font-size:8.30px;line-height:11px;transform:scaleX(0.867);transform-origin:0 50%;">Cycles</div>
<div class="a" style="left:209.4px;top:494.1px;font-size:8.30px;line-height:11px;transform:scaleX(0.874);transform-origin:0 50%;color:#8a8a8a;">Points Per Cycle</div>
<div class="a" style="left:209.4px;top:506.0px;font-size:8.30px;line-height:11px;transform:scaleX(0.900);transform-origin:0 50%;color:#8a8a8a;">Total Points</div>
<div class="a" style="left:284.8px;top:470.0px;font-size:8.30px;line-height:11px;transform:scaleX(1.034);transform-origin:0 50%;">0.05</div>
<div class="a" style="left:284.8px;top:482.0px;font-size:8.30px;line-height:11px;transform:scaleX(0.888);transform-origin:0 50%;">10</div>
<div class="a" style="left:284.8px;top:494.1px;font-size:8.30px;line-height:11px;transform:scaleX(0.905);transform-origin:0 50%;color:#8a8a8a;">2000</div>
<div class="a" style="left:284.8px;top:506.0px;font-size:8.30px;line-height:11px;transform:scaleX(0.919);transform-origin:0 50%;color:#8a8a8a;">22000</div>
<div class="a" style="left:343.4px;top:450.2px;width:123.1px;height:44.6px;background:#fff;border:1px solid #c2c4c9;box-shadow:0 0 0 .5px #e6e6e6"></div>
<div class="a" style="left:344.4px;top:451.2px;width:121.1px;height:16.1px;background:linear-gradient(#ffffff,#f4f5f7);border-bottom:1px solid #dfe2e6"></div>
<div class="a" style="left:385.5px;top:452.2px;width:0.8px;height:14.1px;background:#e3e5e9"></div>
<div class="a" style="left:422.0px;top:452.2px;width:0.8px;height:14.1px;background:#e3e5e9"></div>
<div class="a" style="left:349.4px;top:455.2px;font-size:8.30px;line-height:11px;transform:scaleX(0.812);transform-origin:0 50%;">Limits</div>
<div class="a" style="left:390.3px;top:455.2px;font-size:8.30px;line-height:11px;transform:scaleX(0.876);transform-origin:0 50%;">Direction</div>
<div class="a" style="left:427.8px;top:455.2px;font-size:8.30px;line-height:11px;transform:scaleX(0.932);transform-origin:0 50%;">Value</div>
<div class="a" style="left:424.6px;top:468.7px;width:40.9px;height:12.0px;background:#ffffc6"></div>
<div class="a" style="left:424.6px;top:480.7px;width:40.9px;height:12.0px;background:#ffffc6"></div>
<div class="a" style="left:344.4px;top:480.5px;width:121.1px;height:0.6px;background:#f0f0f0"></div>
<div class="a u" style="left:349.4px;top:470.0px;font-size:8.30px;line-height:11px;transform:scaleX(0.912);transform-origin:0 50%;">None</div>
<div class="a u" style="left:390.3px;top:469.4px;font-size:8.30px;line-height:11px;transform:scaleX(0.887);transform-origin:0 50%;">&lt;</div>
<div class="a" style="left:428.0px;top:470.0px;font-size:8.30px;line-height:11px;transform:scaleX(0.867);transform-origin:0 50%;">0</div>
<div class="a u" style="left:349.4px;top:482.0px;font-size:8.30px;line-height:11px;transform:scaleX(0.912);transform-origin:0 50%;">None</div>
<div class="a u" style="left:390.3px;top:481.4px;font-size:8.30px;line-height:11px;transform:scaleX(0.887);transform-origin:0 50%;">&lt;</div>
<div class="a" style="left:428.0px;top:482.0px;font-size:8.30px;line-height:11px;transform:scaleX(0.867);transform-origin:0 50%;">0</div>
<div class="a" style="left:343.4px;top:498.2px;width:123.1px;height:43.8px;background:#fff;border:1px solid #c2c4c9;box-shadow:0 0 0 .5px #e6e6e6"></div>
<div class="a" style="left:344.4px;top:499.2px;width:121.1px;height:16.0px;background:linear-gradient(#ffffff,#f4f5f7);border-bottom:1px solid #dfe2e6"></div>
<div class="a" style="left:412.5px;top:500.2px;width:0.8px;height:14.0px;background:#e3e5e9"></div>
<div class="a" style="left:349.4px;top:502.8px;font-size:8.30px;line-height:11px;transform:scaleX(0.856);transform-origin:0 50%;">Cell Properties</div>
<div class="a" style="left:418.4px;top:502.8px;font-size:8.30px;line-height:11px;transform:scaleX(0.902);transform-origin:0 50%;">Value</div>
<div class="a" style="left:344.4px;top:528.2px;width:121.1px;height:0.6px;background:#f0f0f0"></div>
<div class="a" style="left:349.4px;top:517.7px;font-size:8.30px;line-height:11px;transform:scaleX(0.891);transform-origin:0 50%;">Leave Cell ON</div>
<div class="a u" style="left:418.4px;top:517.7px;font-size:8.30px;line-height:11px;transform:scaleX(0.905);transform-origin:0 50%;">No</div>
<div class="a" style="left:349.4px;top:529.6px;font-size:8.30px;line-height:11px;transform:scaleX(0.852);transform-origin:0 50%;">Cell to Use</div>
<div class="a u" style="left:418.4px;top:529.6px;font-size:8.30px;line-height:11px;transform:scaleX(0.874);transform-origin:0 50%;">External</div>
<div class="a" style="left:470.3px;top:378.4px;width:133.4px;height:128.0px;background:#fff;border:1px solid #c2c4c9;box-shadow:0 0 0 .5px #e6e6e6"></div>
<div class="a" style="left:471.3px;top:379.4px;width:131.4px;height:16.0px;background:linear-gradient(#ffffff,#f4f5f7);border-bottom:1px solid #dfe2e6"></div>
<div class="a" style="left:549.4px;top:380.4px;width:0.8px;height:14.0px;background:#e3e5e9"></div>
<div class="a" style="left:475.4px;top:383.1px;font-size:8.30px;line-height:11px;transform:scaleX(0.881);transform-origin:0 50%;">Instrument Properties</div>
<div class="a" style="left:554.0px;top:383.1px;font-size:8.30px;line-height:11px;transform:scaleX(0.893);transform-origin:0 50%;">Value</div>
<div class="a" style="left:471.3px;top:408.6px;width:131.4px;height:0.6px;background:#f0f0f0"></div>
<div class="a" style="left:471.3px;top:420.5px;width:131.4px;height:0.6px;background:#f0f0f0"></div>
<div class="a" style="left:471.3px;top:432.4px;width:131.4px;height:0.6px;background:#f0f0f0"></div>
<div class="a" style="left:471.3px;top:444.6px;width:131.4px;height:0.6px;background:#f0f0f0"></div>
<div class="a" style="left:471.3px;top:456.5px;width:131.4px;height:0.6px;background:#f0f0f0"></div>
<div class="a" style="left:471.3px;top:468.4px;width:131.4px;height:0.6px;background:#f0f0f0"></div>
<div class="a" style="left:471.3px;top:480.3px;width:131.4px;height:0.6px;background:#f0f0f0"></div>
<div class="a" style="left:471.3px;top:492.3px;width:131.4px;height:0.6px;background:#f0f0f0"></div>
<div class="a" style="left:549.4px;top:396.0px;width:0.8px;height:109.5px;background:#f1f1f1"></div>
<div class="a" style="left:475.4px;top:398.1px;font-size:8.30px;line-height:11px;transform:scaleX(0.801);transform-origin:0 50%;">Current Range</div>
<div class="a u" style="left:554.0px;top:398.1px;font-size:8.30px;line-height:11px;transform:scaleX(0.879);transform-origin:0 50%;">Auto</div>
<div class="a" style="left:475.4px;top:410.0px;font-size:8.30px;line-height:11px;transform:scaleX(0.819);transform-origin:0 50%;color:#8a8a8a;">Voltage Range</div>
<div class="a u" style="left:554.0px;top:410.0px;font-size:8.30px;line-height:11px;transform:scaleX(0.947);transform-origin:0 50%;color:#8a8a8a;">+/-6V</div>
<div class="a" style="left:475.4px;top:421.9px;font-size:8.30px;line-height:11px;transform:scaleX(0.893);transform-origin:0 50%;color:#8a8a8a;">Electrometer Mode</div>
<div class="a u" style="left:554.0px;top:421.9px;font-size:8.30px;line-height:11px;transform:scaleX(0.876);transform-origin:0 50%;">Differential</div>
<div class="a" style="left:475.4px;top:434.1px;font-size:8.30px;line-height:11px;transform:scaleX(0.841);transform-origin:0 50%;">E Filter</div>
<div class="a u" style="left:554.0px;top:434.1px;font-size:8.30px;line-height:11px;transform:scaleX(0.879);transform-origin:0 50%;">Auto</div>
<div class="a" style="left:475.4px;top:446.0px;font-size:8.30px;line-height:11px;transform:scaleX(0.861);transform-origin:0 50%;color:#8a8a8a;">E2 Filter</div>
<div class="a u" style="left:554.0px;top:446.0px;font-size:8.30px;line-height:11px;transform:scaleX(0.879);transform-origin:0 50%;color:#8a8a8a;">Auto</div>
<div class="a" style="left:475.4px;top:457.9px;font-size:8.30px;line-height:11px;transform:scaleX(0.828);transform-origin:0 50%;">I Filter</div>
<div class="a u" style="left:554.0px;top:457.9px;font-size:8.30px;line-height:11px;transform:scaleX(0.879);transform-origin:0 50%;">Auto</div>
<div class="a" style="left:475.4px;top:469.8px;font-size:8.30px;line-height:11px;transform:scaleX(0.881);transform-origin:0 50%;">Bandwidth Limit</div>
<div class="a u" style="left:554.0px;top:469.8px;font-size:8.30px;line-height:11px;transform:scaleX(0.879);transform-origin:0 50%;">Auto</div>
<div class="a" style="left:475.4px;top:481.8px;font-size:8.30px;line-height:11px;transform:scaleX(0.882);transform-origin:0 50%;">LCI Bandwidth Limit</div>
<div class="a u" style="left:554.0px;top:481.8px;font-size:8.30px;line-height:11px;transform:scaleX(0.879);transform-origin:0 50%;">Auto</div>
<div class="a" style="left:475.4px;top:493.9px;font-size:8.30px;line-height:11px;transform:scaleX(0.873);transform-origin:0 50%;color:#8a8a8a;">iR Compensation</div>
<div class="a u" style="left:554.0px;top:493.9px;font-size:8.30px;line-height:11px;transform:scaleX(0.879);transform-origin:0 50%;">Disabled</div>
<div class="a" style="left:830.5px;top:33.2px;width:297.5px;height:13.2px;background:linear-gradient(#e3eaf3 0,#d5dfeb 40%,#c3d0e0 90%,#9dabbe 100%)"></div>
<div class="a" style="left:834.5px;top:34.8px;font-size:8.00px;line-height:11px;color:#5a6478;">Data View - 1000 of 20003 Points (Segments 3,4,5,6,7)</div>
<svg style="left:1117px;top:36px" width="8" height="10"><path d="M2.8 1.8H5.4V5.4H2.8Z M4.9 1.8V5.4 M1.8 5.6H6.4 M4.1 5.8V8.6" stroke="#3a3a44" stroke-width=".7" fill="none"/></svg>
<div class="a" style="left:830.5px;top:46.4px;width:297.5px;height:19.8px;background:#f1f1f1"></div>
<svg style="left:830px;top:46px" width="100" height="22" viewBox="830 46 100 22"><rect x="838.3" y="49" width="10.6" height="10.4" rx="1" fill="#fdfdfe" stroke="#c3cbdc" stroke-width=".8"/><path d="M840 51.4 Q843.6 50.2 847.2 51.4 L844.6 55 V57.6 H842.6 V55Z" fill="#1b5fb8"/><path d="M842.7 55.6H844.5V57.8H842.7Z" fill="#0a0a1a"/><rect x="860.2" y="49" width="10.6" height="10.4" rx="1" fill="#f4f6fb" stroke="#c3cbdc" stroke-width=".8"/><rect x="862.6" y="52" width="5.8" height="5.4" fill="#fff" stroke="#1c2a6a" stroke-width="1"/><path d="M864 54.2 L865.6 56 L869.4 50.8" stroke="#d8202a" stroke-width="1.1" fill="none"/><path d="M884 50.4H891.8" stroke="#3a5f9a" stroke-width=".9"/><path d="M887.9 51.4 L891.8 55 H889.7 V58.6 H886.1 V55 H884Z" fill="#3e78c4"/><path d="M906 58.7H913.4" stroke="#9ab4da" stroke-width=".8"/><path d="M909.7 58 L913.4 54.4 H911.4 V50.6 H908 V54.4 H906Z" fill="#3e78c4"/></svg>
<div class="a" style="left:830.5px;top:66.1px;width:297.5px;height:1.7px;background:#6a6a6a"></div>
<div class="a" style="left:830.5px;top:68.0px;width:286.0px;height:506.0px;background:#fff"></div>
<div class="a" style="left:830.5px;top:68.0px;width:286.0px;height:15.6px;background:linear-gradient(#ffffff,#f7f8fa);border-bottom:1px solid #d9dde2"></div>
<div class="a" style="left:893.7px;top:68.0px;width:0.8px;height:15.0px;background:#e2e5ea"></div>
<div class="a" style="left:893.7px;top:84.0px;width:0.8px;height:490.0px;background:#f3f3f3"></div>
<div class="a" style="left:956.6px;top:68.0px;width:0.8px;height:15.0px;background:#e2e5ea"></div>
<div class="a" style="left:956.6px;top:84.0px;width:0.8px;height:490.0px;background:#f3f3f3"></div>
<div class="a" style="left:999.0px;top:68.0px;width:0.8px;height:15.0px;background:#e2e5ea"></div>
<div class="a" style="left:999.0px;top:84.0px;width:0.8px;height:490.0px;background:#f3f3f3"></div>
<div class="a" style="left:1041.3px;top:68.0px;width:0.8px;height:15.0px;background:#e2e5ea"></div>
<div class="a" style="left:1041.3px;top:84.0px;width:0.8px;height:490.0px;background:#f3f3f3"></div>
<div class="a m" style="left:834.5px;top:71.3px;letter-spacing:-0.22px">Potential (V)</div>
<div class="a m" style="left:897.5px;top:71.3px;letter-spacing:-0.22px">Current (A)</div>
<div class="a m" style="left:960.5px;top:71.3px;letter-spacing:-0.22px">Segment</div>
<div class="a m" style="left:1003.0px;top:71.3px;letter-spacing:-0.22px">Point</div>
<div class="a" style="left:830.5px;top:95.6px;width:286.0px;height:0.7px;background:#f1f1f1"></div>
<div class="a m" style="left:834.5px;top:85.2px;letter-spacing:-0.22px">-1.184&nbsp; V</div>
<div class="a m" style="left:897.5px;top:85.2px;letter-spacing:-0.22px">-185.312 µA</div>
<div class="a m" style="left:960.5px;top:85.2px;letter-spacing:-0.22px">3</div>
<div class="a m" style="left:1003.0px;top:85.2px;letter-spacing:-0.22px">4.01 k</div>
<div class="a" style="left:830.5px;top:106.9px;width:286.0px;height:0.7px;background:#f1f1f1"></div>
<div class="a m" style="left:834.5px;top:96.5px;letter-spacing:-0.22px">-1.171&nbsp; V</div>
<div class="a m" style="left:897.5px;top:96.5px;letter-spacing:-0.22px">-147.386 µA</div>
<div class="a m" style="left:960.5px;top:96.5px;letter-spacing:-0.22px">3</div>
<div class="a m" style="left:1003.0px;top:96.5px;letter-spacing:-0.22px">4.02 k</div>
<div class="a" style="left:830.5px;top:118.1px;width:286.0px;height:0.7px;background:#f1f1f1"></div>
<div class="a m" style="left:834.5px;top:107.7px;letter-spacing:-0.22px">-1.157&nbsp; V</div>
<div class="a m" style="left:897.5px;top:107.7px;letter-spacing:-0.22px">-121.582 µA</div>
<div class="a m" style="left:960.5px;top:107.7px;letter-spacing:-0.22px">3</div>
<div class="a m" style="left:1003.0px;top:107.7px;letter-spacing:-0.22px">4.03 k</div>
<div class="a" style="left:830.5px;top:129.4px;width:286.0px;height:0.7px;background:#f1f1f1"></div>
<div class="a m" style="left:834.5px;top:119.0px;letter-spacing:-0.22px">-1.143&nbsp; V</div>
<div class="a m" style="left:897.5px;top:119.0px;letter-spacing:-0.22px">-101.241 µA</div>
<div class="a m" style="left:960.5px;top:119.0px;letter-spacing:-0.22px">3</div>
<div class="a m" style="left:1003.0px;top:119.0px;letter-spacing:-0.22px">4.04 k</div>
<div class="a" style="left:830.5px;top:140.7px;width:286.0px;height:0.7px;background:#f1f1f1"></div>
<div class="a m" style="left:834.5px;top:130.3px;letter-spacing:-0.22px">-1.129&nbsp; V</div>
<div class="a m" style="left:897.5px;top:130.3px;letter-spacing:-0.22px">-87.253 µA</div>
<div class="a m" style="left:960.5px;top:130.3px;letter-spacing:-0.22px">3</div>
<div class="a m" style="left:1003.0px;top:130.3px;letter-spacing:-0.22px">4.05 k</div>
<div class="a" style="left:830.5px;top:152.0px;width:286.0px;height:0.7px;background:#f1f1f1"></div>
<div class="a m" style="left:834.5px;top:141.6px;letter-spacing:-0.22px">-1.115&nbsp; V</div>
<div class="a m" style="left:897.5px;top:141.6px;letter-spacing:-0.22px">-77.162 µA</div>
<div class="a m" style="left:960.5px;top:141.6px;letter-spacing:-0.22px">3</div>
<div class="a m" style="left:1003.0px;top:141.6px;letter-spacing:-0.22px">4.06 k</div>
<div class="a" style="left:830.5px;top:163.2px;width:286.0px;height:0.7px;background:#f1f1f1"></div>
<div class="a m" style="left:834.5px;top:152.8px;letter-spacing:-0.22px">-1.101&nbsp; V</div>
<div class="a m" style="left:897.5px;top:152.8px;letter-spacing:-0.22px">-69.376 µA</div>
<div class="a m" style="left:960.5px;top:152.8px;letter-spacing:-0.22px">3</div>
<div class="a m" style="left:1003.0px;top:152.8px;letter-spacing:-0.22px">4.07 k</div>
<div class="a" style="left:830.5px;top:174.5px;width:286.0px;height:0.7px;background:#f1f1f1"></div>
<div class="a m" style="left:834.5px;top:164.1px;letter-spacing:-0.22px">-1.087&nbsp; V</div>
<div class="a m" style="left:897.5px;top:164.1px;letter-spacing:-0.22px">-63.747 µA</div>
<div class="a m" style="left:960.5px;top:164.1px;letter-spacing:-0.22px">3</div>
<div class="a m" style="left:1003.0px;top:164.1px;letter-spacing:-0.22px">4.08 k</div>
<div class="a" style="left:830.5px;top:185.8px;width:286.0px;height:0.7px;background:#f1f1f1"></div>
<div class="a m" style="left:834.5px;top:175.4px;letter-spacing:-0.22px">-1.072&nbsp; V</div>
<div class="a m" style="left:897.5px;top:175.4px;letter-spacing:-0.22px">-58.462 µA</div>
<div class="a m" style="left:960.5px;top:175.4px;letter-spacing:-0.22px">3</div>
<div class="a m" style="left:1003.0px;top:175.4px;letter-spacing:-0.22px">4.09 k</div>
<div class="a" style="left:830.5px;top:197.0px;width:286.0px;height:0.7px;background:#f1f1f1"></div>
<div class="a m" style="left:834.5px;top:186.6px;letter-spacing:-0.22px">-1.058&nbsp; V</div>
<div class="a m" style="left:897.5px;top:186.6px;letter-spacing:-0.22px">-54.95 µA</div>
<div class="a m" style="left:960.5px;top:186.6px;letter-spacing:-0.22px">3</div>
<div class="a m" style="left:1003.0px;top:186.6px;letter-spacing:-0.22px">4.1 k</div>
<div class="a" style="left:830.5px;top:208.3px;width:286.0px;height:0.7px;background:#f1f1f1"></div>
<div class="a m" style="left:834.5px;top:197.9px;letter-spacing:-0.22px">-1.045&nbsp; V</div>
<div class="a m" style="left:897.5px;top:197.9px;letter-spacing:-0.22px">-50.393 µA</div>
<div class="a m" style="left:960.5px;top:197.9px;letter-spacing:-0.22px">3</div>
<div class="a m" style="left:1003.0px;top:197.9px;letter-spacing:-0.22px">4.11 k</div>
<div class="a" style="left:830.5px;top:219.6px;width:286.0px;height:0.7px;background:#f1f1f1"></div>
<div class="a m" style="left:834.5px;top:209.2px;letter-spacing:-0.22px">-1.031&nbsp; V</div>
<div class="a m" style="left:897.5px;top:209.2px;letter-spacing:-0.22px">-48.223 µA</div>
<div class="a m" style="left:960.5px;top:209.2px;letter-spacing:-0.22px">3</div>
<div class="a m" style="left:1003.0px;top:209.2px;letter-spacing:-0.22px">4.12 k</div>
<div class="a" style="left:830.5px;top:230.9px;width:286.0px;height:0.7px;background:#f1f1f1"></div>
<div class="a m" style="left:834.5px;top:220.5px;letter-spacing:-0.22px">-1.017&nbsp; V</div>
<div class="a m" style="left:897.5px;top:220.5px;letter-spacing:-0.22px">-46.118 µA</div>
<div class="a m" style="left:960.5px;top:220.5px;letter-spacing:-0.22px">3</div>
<div class="a m" style="left:1003.0px;top:220.5px;letter-spacing:-0.22px">4.13 k</div>
<div class="a" style="left:830.5px;top:242.1px;width:286.0px;height:0.7px;background:#f1f1f1"></div>
<div class="a m" style="left:834.5px;top:231.7px;letter-spacing:-0.22px">-1.002&nbsp; V</div>
<div class="a m" style="left:897.5px;top:231.7px;letter-spacing:-0.22px">-43.94 µA</div>
<div class="a m" style="left:960.5px;top:231.7px;letter-spacing:-0.22px">3</div>
<div class="a m" style="left:1003.0px;top:231.7px;letter-spacing:-0.22px">4.14 k</div>
<div class="a" style="left:830.5px;top:253.4px;width:286.0px;height:0.7px;background:#f1f1f1"></div>
<div class="a m" style="left:834.5px;top:243.0px;letter-spacing:-0.22px">-989.047 mV</div>
<div class="a m" style="left:897.5px;top:243.0px;letter-spacing:-0.22px">-42.14 µA</div>
<div class="a m" style="left:960.5px;top:243.0px;letter-spacing:-0.22px">3</div>
<div class="a m" style="left:1003.0px;top:243.0px;letter-spacing:-0.22px">4.15 k</div>
<div class="a" style="left:830.5px;top:264.7px;width:286.0px;height:0.7px;background:#f1f1f1"></div>
<div class="a m" style="left:834.5px;top:254.3px;letter-spacing:-0.22px">-975.163 mV</div>
<div class="a m" style="left:897.5px;top:254.3px;letter-spacing:-0.22px">-42.335 µA</div>
<div class="a m" style="left:960.5px;top:254.3px;letter-spacing:-0.22px">3</div>
<div class="a m" style="left:1003.0px;top:254.3px;letter-spacing:-0.22px">4.16 k</div>
<div class="a" style="left:830.5px;top:276.0px;width:286.0px;height:0.7px;background:#f1f1f1"></div>
<div class="a m" style="left:834.5px;top:265.6px;letter-spacing:-0.22px">-961.395 mV</div>
<div class="a m" style="left:897.5px;top:265.6px;letter-spacing:-0.22px">-40.533 µA</div>
<div class="a m" style="left:960.5px;top:265.6px;letter-spacing:-0.22px">3</div>
<div class="a m" style="left:1003.0px;top:265.6px;letter-spacing:-0.22px">4.17 k</div>
<div class="a" style="left:830.5px;top:287.2px;width:286.0px;height:0.7px;background:#f1f1f1"></div>
<div class="a m" style="left:834.5px;top:276.8px;letter-spacing:-0.22px">-947.376 mV</div>
<div class="a m" style="left:897.5px;top:276.8px;letter-spacing:-0.22px">-39.658 µA</div>
<div class="a m" style="left:960.5px;top:276.8px;letter-spacing:-0.22px">3</div>
<div class="a m" style="left:1003.0px;top:276.8px;letter-spacing:-0.22px">4.18 k</div>
<div class="a" style="left:830.5px;top:298.5px;width:286.0px;height:0.7px;background:#f1f1f1"></div>
<div class="a m" style="left:834.5px;top:288.1px;letter-spacing:-0.22px">-933.026 mV</div>
<div class="a m" style="left:897.5px;top:288.1px;letter-spacing:-0.22px">-38.909 µA</div>
<div class="a m" style="left:960.5px;top:288.1px;letter-spacing:-0.22px">3</div>
<div class="a m" style="left:1003.0px;top:288.1px;letter-spacing:-0.22px">4.19 k</div>
<div class="a" style="left:830.5px;top:309.8px;width:286.0px;height:0.7px;background:#f1f1f1"></div>
<div class="a m" style="left:834.5px;top:299.4px;letter-spacing:-0.22px">-918.424 mV</div>
<div class="a m" style="left:897.5px;top:299.4px;letter-spacing:-0.22px">-38.359 µA</div>
<div class="a m" style="left:960.5px;top:299.4px;letter-spacing:-0.22px">3</div>
<div class="a m" style="left:1003.0px;top:299.4px;letter-spacing:-0.22px">4.2 k</div>
<div class="a" style="left:830.5px;top:321.0px;width:286.0px;height:0.7px;background:#f1f1f1"></div>
<div class="a m" style="left:834.5px;top:310.6px;letter-spacing:-0.22px">-905.413 mV</div>
<div class="a m" style="left:897.5px;top:310.6px;letter-spacing:-0.22px">-41.534 µA</div>
<div class="a m" style="left:960.5px;top:310.6px;letter-spacing:-0.22px">3</div>
<div class="a m" style="left:1003.0px;top:310.6px;letter-spacing:-0.22px">4.21 k</div>
<div class="a" style="left:830.5px;top:332.3px;width:286.0px;height:0.7px;background:#f1f1f1"></div>
<div class="a m" style="left:834.5px;top:321.9px;letter-spacing:-0.22px">-891.315 mV</div>
<div class="a m" style="left:897.5px;top:321.9px;letter-spacing:-0.22px">-39.652 µA</div>
<div class="a m" style="left:960.5px;top:321.9px;letter-spacing:-0.22px">3</div>
<div class="a m" style="left:1003.0px;top:321.9px;letter-spacing:-0.22px">4.22 k</div>
<div class="a" style="left:830.5px;top:343.6px;width:286.0px;height:0.7px;background:#f1f1f1"></div>
<div class="a m" style="left:834.5px;top:333.2px;letter-spacing:-0.22px">-877.276 mV</div>
<div class="a m" style="left:897.5px;top:333.2px;letter-spacing:-0.22px">-37.463 µA</div>
<div class="a m" style="left:960.5px;top:333.2px;letter-spacing:-0.22px">3</div>
<div class="a m" style="left:1003.0px;top:333.2px;letter-spacing:-0.22px">4.23 k</div>
<div class="a" style="left:830.5px;top:354.9px;width:286.0px;height:0.7px;background:#f1f1f1"></div>
<div class="a m" style="left:834.5px;top:344.5px;letter-spacing:-0.22px">-863.12 mV</div>
<div class="a m" style="left:897.5px;top:344.5px;letter-spacing:-0.22px">-36.26 µA</div>
<div class="a m" style="left:960.5px;top:344.5px;letter-spacing:-0.22px">3</div>
<div class="a m" style="left:1003.0px;top:344.5px;letter-spacing:-0.22px">4.24 k</div>
<div class="a" style="left:830.5px;top:366.1px;width:286.0px;height:0.7px;background:#f1f1f1"></div>
<div class="a m" style="left:834.5px;top:355.7px;letter-spacing:-0.22px">-849.101 mV</div>
<div class="a m" style="left:897.5px;top:355.7px;letter-spacing:-0.22px">-35.047 µA</div>
<div class="a m" style="left:960.5px;top:355.7px;letter-spacing:-0.22px">3</div>
<div class="a m" style="left:1003.0px;top:355.7px;letter-spacing:-0.22px">4.25 k</div>
<div class="a" style="left:830.5px;top:377.4px;width:286.0px;height:0.7px;background:#f1f1f1"></div>
<div class="a m" style="left:834.5px;top:367.0px;letter-spacing:-0.22px">-835.139 mV</div>
<div class="a m" style="left:897.5px;top:367.0px;letter-spacing:-0.22px">-35.371 µA</div>
<div class="a m" style="left:960.5px;top:367.0px;letter-spacing:-0.22px">3</div>
<div class="a m" style="left:1003.0px;top:367.0px;letter-spacing:-0.22px">4.26 k</div>
<div class="a" style="left:830.5px;top:388.7px;width:286.0px;height:0.7px;background:#f1f1f1"></div>
<div class="a m" style="left:834.5px;top:378.3px;letter-spacing:-0.22px">-821.507 mV</div>
<div class="a m" style="left:897.5px;top:378.3px;letter-spacing:-0.22px">-34.784 µA</div>
<div class="a m" style="left:960.5px;top:378.3px;letter-spacing:-0.22px">3</div>
<div class="a m" style="left:1003.0px;top:378.3px;letter-spacing:-0.22px">4.27 k</div>
<div class="a" style="left:830.5px;top:399.9px;width:286.0px;height:0.7px;background:#f1f1f1"></div>
<div class="a m" style="left:834.5px;top:389.5px;letter-spacing:-0.22px">-807.584 mV</div>
<div class="a m" style="left:897.5px;top:389.5px;letter-spacing:-0.22px">-34.217 µA</div>
<div class="a m" style="left:960.5px;top:389.5px;letter-spacing:-0.22px">3</div>
<div class="a m" style="left:1003.0px;top:389.5px;letter-spacing:-0.22px">4.28 k</div>
<div class="a" style="left:830.5px;top:411.2px;width:286.0px;height:0.7px;background:#f1f1f1"></div>
<div class="a m" style="left:834.5px;top:400.8px;letter-spacing:-0.22px">-793.506 mV</div>
<div class="a m" style="left:897.5px;top:400.8px;letter-spacing:-0.22px">-31.682 µA</div>
<div class="a m" style="left:960.5px;top:400.8px;letter-spacing:-0.22px">3</div>
<div class="a m" style="left:1003.0px;top:400.8px;letter-spacing:-0.22px">4.29 k</div>
<div class="a" style="left:830.5px;top:422.5px;width:286.0px;height:0.7px;background:#f1f1f1"></div>
<div class="a m" style="left:834.5px;top:412.1px;letter-spacing:-0.22px">-779.292 mV</div>
<div class="a m" style="left:897.5px;top:412.1px;letter-spacing:-0.22px">-33.599 µA</div>
<div class="a m" style="left:960.5px;top:412.1px;letter-spacing:-0.22px">3</div>
<div class="a m" style="left:1003.0px;top:412.1px;letter-spacing:-0.22px">4.3 k</div>
<div class="a" style="left:830.5px;top:433.8px;width:286.0px;height:0.7px;background:#f1f1f1"></div>
<div class="a m" style="left:834.5px;top:423.4px;letter-spacing:-0.22px">-765.253 mV</div>
<div class="a m" style="left:897.5px;top:423.4px;letter-spacing:-0.22px">-33.797 µA</div>
<div class="a m" style="left:960.5px;top:423.4px;letter-spacing:-0.22px">3</div>
<div class="a m" style="left:1003.0px;top:423.4px;letter-spacing:-0.22px">4.31 k</div>
<div class="a" style="left:830.5px;top:445.0px;width:286.0px;height:0.7px;background:#f1f1f1"></div>
<div class="a m" style="left:834.5px;top:434.6px;letter-spacing:-0.22px">-750.942 mV</div>
<div class="a m" style="left:897.5px;top:434.6px;letter-spacing:-0.22px">-33.128 µA</div>
<div class="a m" style="left:960.5px;top:434.6px;letter-spacing:-0.22px">3</div>
<div class="a m" style="left:1003.0px;top:434.6px;letter-spacing:-0.22px">4.32 k</div>
<div class="a" style="left:830.5px;top:456.3px;width:286.0px;height:0.7px;background:#f1f1f1"></div>
<div class="a m" style="left:834.5px;top:445.9px;letter-spacing:-0.22px">-737.271 mV</div>
<div class="a m" style="left:897.5px;top:445.9px;letter-spacing:-0.22px">-33.389 µA</div>
<div class="a m" style="left:960.5px;top:445.9px;letter-spacing:-0.22px">3</div>
<div class="a m" style="left:1003.0px;top:445.9px;letter-spacing:-0.22px">4.33 k</div>
<div class="a" style="left:830.5px;top:467.6px;width:286.0px;height:0.7px;background:#f1f1f1"></div>
<div class="a m" style="left:834.5px;top:457.2px;letter-spacing:-0.22px">-723.504 mV</div>
<div class="a m" style="left:897.5px;top:457.2px;letter-spacing:-0.22px">-32.988 µA</div>
<div class="a m" style="left:960.5px;top:457.2px;letter-spacing:-0.22px">3</div>
<div class="a m" style="left:1003.0px;top:457.2px;letter-spacing:-0.22px">4.34 k</div>
<div class="a" style="left:830.5px;top:478.8px;width:286.0px;height:0.7px;background:#f1f1f1"></div>
<div class="a m" style="left:834.5px;top:468.4px;letter-spacing:-0.22px">-709.387 mV</div>
<div class="a m" style="left:897.5px;top:468.4px;letter-spacing:-0.22px">-32.834 µA</div>
<div class="a m" style="left:960.5px;top:468.4px;letter-spacing:-0.22px">3</div>
<div class="a m" style="left:1003.0px;top:468.4px;letter-spacing:-0.22px">4.35 k</div>
<div class="a" style="left:830.5px;top:490.1px;width:286.0px;height:0.7px;background:#f1f1f1"></div>
<div class="a m" style="left:834.5px;top:479.7px;letter-spacing:-0.22px">-695.309 mV</div>
<div class="a m" style="left:897.5px;top:479.7px;letter-spacing:-0.22px">-32.803 µA</div>
<div class="a m" style="left:960.5px;top:479.7px;letter-spacing:-0.22px">3</div>
<div class="a m" style="left:1003.0px;top:479.7px;letter-spacing:-0.22px">4.36 k</div>
<div class="a" style="left:830.5px;top:501.4px;width:286.0px;height:0.7px;background:#f1f1f1"></div>
<div class="a m" style="left:834.5px;top:491.0px;letter-spacing:-0.22px">-681.25 mV</div>
<div class="a m" style="left:897.5px;top:491.0px;letter-spacing:-0.22px">-32.649 µA</div>
<div class="a m" style="left:960.5px;top:491.0px;letter-spacing:-0.22px">3</div>
<div class="a m" style="left:1003.0px;top:491.0px;letter-spacing:-0.22px">4.37 k</div>
<div class="a" style="left:830.5px;top:512.7px;width:286.0px;height:0.7px;background:#f1f1f1"></div>
<div class="a m" style="left:834.5px;top:502.3px;letter-spacing:-0.22px">-667.23 mV</div>
<div class="a m" style="left:897.5px;top:502.3px;letter-spacing:-0.22px">-32.762 µA</div>
<div class="a m" style="left:960.5px;top:502.3px;letter-spacing:-0.22px">3</div>
<div class="a m" style="left:1003.0px;top:502.3px;letter-spacing:-0.22px">4.38 k</div>
<div class="a" style="left:830.5px;top:523.9px;width:286.0px;height:0.7px;background:#f1f1f1"></div>
<div class="a m" style="left:834.5px;top:513.5px;letter-spacing:-0.22px">-653.055 mV</div>
<div class="a m" style="left:897.5px;top:513.5px;letter-spacing:-0.22px">-31.67 µA</div>
<div class="a m" style="left:960.5px;top:513.5px;letter-spacing:-0.22px">3</div>
<div class="a m" style="left:1003.0px;top:513.5px;letter-spacing:-0.22px">4.39 k</div>
<div class="a" style="left:830.5px;top:535.2px;width:286.0px;height:0.7px;background:#f1f1f1"></div>
<div class="a m" style="left:834.5px;top:524.8px;letter-spacing:-0.22px">-639.346 mV</div>
<div class="a m" style="left:897.5px;top:524.8px;letter-spacing:-0.22px">-32.442 µA</div>
<div class="a m" style="left:960.5px;top:524.8px;letter-spacing:-0.22px">3</div>
<div class="a m" style="left:1003.0px;top:524.8px;letter-spacing:-0.22px">4.4 k</div>
<div class="a" style="left:830.5px;top:546.5px;width:286.0px;height:0.7px;background:#f1f1f1"></div>
<div class="a m" style="left:834.5px;top:536.1px;letter-spacing:-0.22px">-625.306 mV</div>
<div class="a m" style="left:897.5px;top:536.1px;letter-spacing:-0.22px">-31.509 µA</div>
<div class="a m" style="left:960.5px;top:536.1px;letter-spacing:-0.22px">3</div>
<div class="a m" style="left:1003.0px;top:536.1px;letter-spacing:-0.22px">4.41 k</div>
<div class="a" style="left:830.5px;top:557.8px;width:286.0px;height:0.7px;background:#f1f1f1"></div>
<div class="a m" style="left:834.5px;top:547.4px;letter-spacing:-0.22px">-611.19 mV</div>
<div class="a m" style="left:897.5px;top:547.4px;letter-spacing:-0.22px">-31.821 µA</div>
<div class="a m" style="left:960.5px;top:547.4px;letter-spacing:-0.22px">3</div>
<div class="a m" style="left:1003.0px;top:547.4px;letter-spacing:-0.22px">4.42 k</div>
<div class="a" style="left:830.5px;top:569.0px;width:286.0px;height:0.7px;background:#f1f1f1"></div>
<div class="a m" style="left:834.5px;top:558.6px;letter-spacing:-0.22px">-597.383 mV</div>
<div class="a m" style="left:897.5px;top:558.6px;letter-spacing:-0.22px">-31.46 µA</div>
<div class="a m" style="left:960.5px;top:558.6px;letter-spacing:-0.22px">3</div>
<div class="a m" style="left:1003.0px;top:558.6px;letter-spacing:-0.22px">4.43 k</div>
<div class="a" style="left:830.5px;top:580.3px;width:286.0px;height:0.7px;background:#f1f1f1"></div>
<div class="a m" style="left:834.5px;top:569.9px;letter-spacing:-0.22px">-583.322 mV</div>
<div class="a m" style="left:897.5px;top:569.9px;letter-spacing:-0.22px">-31.375 µA</div>
<div class="a m" style="left:960.5px;top:569.9px;letter-spacing:-0.22px">3</div>
<div class="a m" style="left:1003.0px;top:569.9px;letter-spacing:-0.22px">4.44 k</div>
<div class="a" style="left:1115.5px;top:67.8px;width:12.5px;height:506.2px;background:linear-gradient(90deg,#f6f6f6,#ececec 30%,#f0f0f0)"></div>
<div class="a" style="left:1117.2px;top:80.0px;width:9.6px;height:19.6px;background:linear-gradient(90deg,#f5f5f5,#dcdcdc);border:1px solid #b4b4b4;border-radius:1.5px"></div>
<svg style="left:1117px;top:70px" width="10" height="500"><path d="M2.5 6 L5 3 L7.5 6Z M2.5 494.5 L5 497.5 L7.5 494.5Z" fill="#444"/><path d="M3 17.5H7M3 19.5H7M3 21.5H7" stroke="#7a7a7a" stroke-width=".7"/></svg>
<div class="a" style="left:0.0px;top:574.0px;width:1128.0px;height:1.0px;background:#9a9a9a"></div>
<div class="a" style="left:0.0px;top:575.0px;width:1128.0px;height:16.0px;background:#f0eeee"></div>
<div class="a" style="left:154.5px;top:575.5px;width:71.0px;height:15.5px;background:linear-gradient(#fdfdfd,#f4f4f4);border-left:1px solid #dcdcdc;border-right:1px solid #dcdcdc"></div>
<div class="a" style="left:299.7px;top:576.0px;width:0.8px;height:15.0px;background:#dddddd"></div>
<div class="a" style="left:374.0px;top:576.0px;width:0.8px;height:15.0px;background:#dddddd"></div>
<div class="a" style="left:409.5px;top:576.0px;width:0.8px;height:15.0px;background:#dddddd"></div>
<div class="a" style="left:448.0px;top:576.0px;width:0.8px;height:15.0px;background:#dddddd"></div>
<div class="a" style="left:2.0px;top:578.9px;font-size:7.00px;line-height:9px;letter-spacing:-0.178px;color:#111;">PARSTAT MC : PMC-200, PMC-200-3</div>
<div class="a" style="left:174.0px;top:578.7px;font-size:7.00px;line-height:9px;letter-spacing:-0.312px;color:#222;">Cell OFF</div>
<div class="a" style="left:233.0px;top:578.7px;font-size:6.80px;line-height:9px;letter-spacing:0.103px;color:#222;">E = 337 µV</div>
<div class="a" style="left:307.5px;top:578.7px;font-size:6.80px;line-height:9px;letter-spacing:0.076px;color:#222;">I = 0 A</div>
<div class="a" style="left:386.0px;top:578.7px;font-size:6.80px;line-height:9px;letter-spacing:-0.220px;color:#222;">20uA</div>
<div class="a" style="left:418.0px;top:578.7px;font-size:6.80px;line-height:9px;letter-spacing:0.069px;color:#222;">External</div>
<div class="a" style="left:593.0px;top:579.5px;font-size:7.00px;line-height:9px;letter-spacing:-0.232px;color:#111;">Logged In: Security Disabled</div>
<div class="a" style="left:685.8px;top:578.3px;width:124.2px;height:12.7px;background:#fe0000"></div>
<div class="a" style="left:687.5px;top:578.1px;font-size:7.00px;line-height:9px;letter-spacing:-0.283px;color:#fff;">Unable to connect to Update site</div>
<svg style="left:1116px;top:580px" width="12" height="11"><path d="M9 2h1.4v1.4H9zM9 5h1.4v1.4H9zM6 5h1.4v1.4H6zM9 8h1.4v1.4H9zM6 8h1.4v1.4H6zM3 8h1.4v1.4H3z" fill="#c9c5c5"/></svg>
</body></html>
